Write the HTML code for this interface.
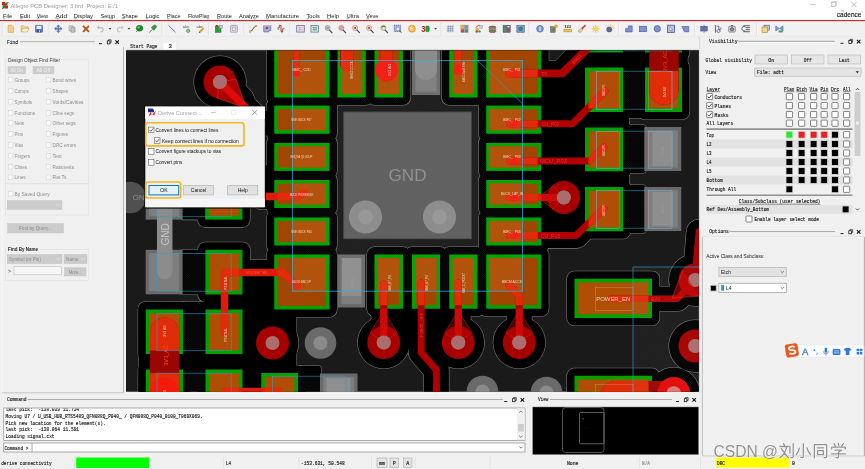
<!DOCTYPE html>
<html><head><meta charset="utf-8"><title>Allegro PCB Designer</title>
<style>
html,body{margin:0;padding:0;background:#f0f0f0;overflow:hidden;}
body{width:865px;height:469px;font-family:"Liberation Sans",sans-serif;}
svg{display:block;}
#wrap{width:865px;height:469px;overflow:hidden;filter:blur(0.35px);}
text{white-space:pre;}
</style></head><body><div id="wrap">
<svg width="865" height="469" viewBox="0 0 865 469">
<rect x="0.00" y="0.00" width="865.00" height="469.00" fill="#f0f0f0" />
<rect x="0.00" y="0.00" width="865.00" height="20.00" fill="#ffffff" />
<g><rect x="2" y="2" width="3" height="3" fill="#d81e1e"/><rect x="5" y="2.5" width="2.5" height="3" fill="#2e9e2e"/><rect x="2.5" y="5" width="2.5" height="3.5" fill="#2e9e2e"/><rect x="5" y="5.5" width="3" height="3" fill="#d81e1e"/><path d="M2 9 L8.5 2" stroke="#b01010" stroke-width="0.8"/></g>
<text x="10.50" y="7.60" font-family='"Liberation Sans", sans-serif' font-size="6.2" fill="#9a9a9a" textLength="107.50" lengthAdjust="spacingAndGlyphs" >Allegro PCB Designer: 3.brd  Project: E:/1</text>
<line x1="810.50" y1="4.60" x2="815.50" y2="4.60" stroke="#9a9a9a" stroke-width="0.6" />
<rect x="831.20" y="2.40" width="4.40" height="4.00" fill="none" stroke="#a8a8a8" stroke-width="0.6" />
<path d="M832.2 2.4 V1.5 H836.6 V5.5 H835.6" fill="none" stroke="#a8a8a8" stroke-width="0.5"/>
<path d="M851.6 2.2 L856.4 7 M856.4 2.2 L851.6 7" stroke="#8a8a8a" stroke-width="0.6"/>
<text x="836.80" y="16.60" font-family='"Liberation Sans", sans-serif' font-size="6.4" fill="#111" textLength="24.60" lengthAdjust="spacingAndGlyphs" stroke="#111" stroke-width="0.12">cadence</text>
<rect x="841.60" y="10.60" width="2.00" height="0.70" fill="#e0202a" />
<text x="861.50" y="12.50" font-family='"Liberation Sans", sans-serif' font-size="2.5" fill="#333" >®</text>
<text x="3.00" y="17.70" font-family='"Liberation Sans", sans-serif' font-size="6.2" fill="#1a1a1a" textLength="9.00" lengthAdjust="spacingAndGlyphs" >File</text>
<line x1="3.00" y1="18.80" x2="5.25" y2="18.80" stroke="#333" stroke-width="0.45" />
<text x="20.00" y="17.70" font-family='"Liberation Sans", sans-serif' font-size="6.2" fill="#1a1a1a" textLength="10.00" lengthAdjust="spacingAndGlyphs" >Edit</text>
<line x1="20.00" y1="18.80" x2="22.50" y2="18.80" stroke="#333" stroke-width="0.45" />
<text x="36.75" y="17.70" font-family='"Liberation Sans", sans-serif' font-size="6.2" fill="#1a1a1a" textLength="11.25" lengthAdjust="spacingAndGlyphs" >View</text>
<line x1="36.75" y1="18.80" x2="39.56" y2="18.80" stroke="#333" stroke-width="0.45" />
<text x="55.50" y="17.70" font-family='"Liberation Sans", sans-serif' font-size="6.2" fill="#1a1a1a" textLength="11.50" lengthAdjust="spacingAndGlyphs" >Add</text>
<line x1="55.50" y1="18.80" x2="59.33" y2="18.80" stroke="#333" stroke-width="0.45" />
<text x="73.75" y="17.70" font-family='"Liberation Sans", sans-serif' font-size="6.2" fill="#1a1a1a" textLength="19.25" lengthAdjust="spacingAndGlyphs" >Display</text>
<line x1="73.75" y1="18.80" x2="76.50" y2="18.80" stroke="#333" stroke-width="0.45" />
<text x="100.50" y="17.70" font-family='"Liberation Sans", sans-serif' font-size="6.2" fill="#1a1a1a" textLength="14.50" lengthAdjust="spacingAndGlyphs" >Setup</text>
<line x1="109.20" y1="18.80" x2="112.10" y2="18.80" stroke="#333" stroke-width="0.45" />
<text x="121.75" y="17.70" font-family='"Liberation Sans", sans-serif' font-size="6.2" fill="#1a1a1a" textLength="16.25" lengthAdjust="spacingAndGlyphs" >Shape</text>
<line x1="121.75" y1="18.80" x2="125.00" y2="18.80" stroke="#333" stroke-width="0.45" />
<text x="145.75" y="17.70" font-family='"Liberation Sans", sans-serif' font-size="6.2" fill="#1a1a1a" textLength="13.75" lengthAdjust="spacingAndGlyphs" >Logic</text>
<line x1="145.75" y1="18.80" x2="148.50" y2="18.80" stroke="#333" stroke-width="0.45" />
<text x="167.00" y="17.70" font-family='"Liberation Sans", sans-serif' font-size="6.2" fill="#1a1a1a" textLength="13.50" lengthAdjust="spacingAndGlyphs" >Place</text>
<line x1="167.00" y1="18.80" x2="169.70" y2="18.80" stroke="#333" stroke-width="0.45" />
<text x="188.00" y="17.70" font-family='"Liberation Sans", sans-serif' font-size="6.2" fill="#1a1a1a" textLength="21.50" lengthAdjust="spacingAndGlyphs" >FlowPlan</text>
<line x1="206.81" y1="18.80" x2="209.50" y2="18.80" stroke="#333" stroke-width="0.45" />
<text x="217.00" y="17.70" font-family='"Liberation Sans", sans-serif' font-size="6.2" fill="#1a1a1a" textLength="15.00" lengthAdjust="spacingAndGlyphs" >Route</text>
<line x1="217.00" y1="18.80" x2="220.00" y2="18.80" stroke="#333" stroke-width="0.45" />
<text x="239.00" y="17.70" font-family='"Liberation Sans", sans-serif' font-size="6.2" fill="#1a1a1a" textLength="20.00" lengthAdjust="spacingAndGlyphs" >Analyze</text>
<line x1="253.29" y1="18.80" x2="256.14" y2="18.80" stroke="#333" stroke-width="0.45" />
<text x="266.00" y="17.70" font-family='"Liberation Sans", sans-serif' font-size="6.2" fill="#1a1a1a" textLength="33.00" lengthAdjust="spacingAndGlyphs" >Manufacture</text>
<line x1="266.00" y1="18.80" x2="269.00" y2="18.80" stroke="#333" stroke-width="0.45" />
<text x="306.50" y="17.70" font-family='"Liberation Sans", sans-serif' font-size="6.2" fill="#1a1a1a" textLength="13.25" lengthAdjust="spacingAndGlyphs" >Tools</text>
<line x1="306.50" y1="18.80" x2="309.15" y2="18.80" stroke="#333" stroke-width="0.45" />
<text x="327.00" y="17.70" font-family='"Liberation Sans", sans-serif' font-size="6.2" fill="#1a1a1a" textLength="12.00" lengthAdjust="spacingAndGlyphs" >Help</text>
<line x1="327.00" y1="18.80" x2="330.00" y2="18.80" stroke="#333" stroke-width="0.45" />
<text x="346.50" y="17.70" font-family='"Liberation Sans", sans-serif' font-size="6.2" fill="#1a1a1a" textLength="12.50" lengthAdjust="spacingAndGlyphs" >Ultra</text>
<line x1="346.50" y1="18.80" x2="349.00" y2="18.80" stroke="#333" stroke-width="0.45" />
<text x="366.00" y="17.70" font-family='"Liberation Sans", sans-serif' font-size="6.2" fill="#1a1a1a" textLength="12.50" lengthAdjust="spacingAndGlyphs" >Veve</text>
<line x1="366.00" y1="18.80" x2="369.12" y2="18.80" stroke="#333" stroke-width="0.45" />
<rect x="0.00" y="20.00" width="865.00" height="1.40" fill="#cc2832" />
<rect x="0.00" y="21.40" width="865.00" height="15.10" fill="#f1f1f1" />
<line x1="0.00" y1="36.30" x2="865.00" y2="36.30" stroke="#e2e2e2" stroke-width="0.6" />
<line x1="2.2" y1="23" x2="2.2" y2="35" stroke="#b8b8b8" stroke-width="0.6" stroke-dasharray="0.8,0.8"/>
<line x1="3.10" y1="23.00" x2="3.10" y2="35.00" stroke="#ffffff" stroke-width="0.5" />
<line x1="49" y1="23" x2="49" y2="35" stroke="#b8b8b8" stroke-width="0.6" stroke-dasharray="0.8,0.8"/>
<line x1="49.90" y1="23.00" x2="49.90" y2="35.00" stroke="#ffffff" stroke-width="0.5" />
<line x1="162" y1="23" x2="162" y2="35" stroke="#b8b8b8" stroke-width="0.6" stroke-dasharray="0.8,0.8"/>
<line x1="162.90" y1="23.00" x2="162.90" y2="35.00" stroke="#ffffff" stroke-width="0.5" />
<line x1="208.7" y1="23" x2="208.7" y2="35" stroke="#b8b8b8" stroke-width="0.6" stroke-dasharray="0.8,0.8"/>
<line x1="209.60" y1="23.00" x2="209.60" y2="35.00" stroke="#ffffff" stroke-width="0.5" />
<line x1="244" y1="23" x2="244" y2="35" stroke="#b8b8b8" stroke-width="0.6" stroke-dasharray="0.8,0.8"/>
<line x1="244.90" y1="23.00" x2="244.90" y2="35.00" stroke="#ffffff" stroke-width="0.5" />
<line x1="289.8" y1="23" x2="289.8" y2="35" stroke="#b8b8b8" stroke-width="0.6" stroke-dasharray="0.8,0.8"/>
<line x1="290.70" y1="23.00" x2="290.70" y2="35.00" stroke="#ffffff" stroke-width="0.5" />
<line x1="441" y1="23" x2="441" y2="35" stroke="#b8b8b8" stroke-width="0.6" stroke-dasharray="0.8,0.8"/>
<line x1="441.90" y1="23.00" x2="441.90" y2="35.00" stroke="#ffffff" stroke-width="0.5" />
<line x1="529" y1="23" x2="529" y2="35" stroke="#b8b8b8" stroke-width="0.6" stroke-dasharray="0.8,0.8"/>
<line x1="529.90" y1="23.00" x2="529.90" y2="35.00" stroke="#ffffff" stroke-width="0.5" />
<line x1="618.8" y1="23" x2="618.8" y2="35" stroke="#b8b8b8" stroke-width="0.6" stroke-dasharray="0.8,0.8"/>
<line x1="619.70" y1="23.00" x2="619.70" y2="35.00" stroke="#ffffff" stroke-width="0.5" />
<line x1="694.8" y1="23" x2="694.8" y2="35" stroke="#b8b8b8" stroke-width="0.6" stroke-dasharray="0.8,0.8"/>
<line x1="695.70" y1="23.00" x2="695.70" y2="35.00" stroke="#ffffff" stroke-width="0.5" />
<line x1="756.5" y1="23" x2="756.5" y2="35" stroke="#b8b8b8" stroke-width="0.6" stroke-dasharray="0.8,0.8"/>
<line x1="757.40" y1="23.00" x2="757.40" y2="35.00" stroke="#ffffff" stroke-width="0.5" />
<g transform="translate(10.9 28.8) scale(0.86) translate(-10.9 -28.8)">
<path d="M7.7 24.6 h4.4 l2 2 v6.4 h-6.4z" fill="#f3cf8c" stroke="#c9963c" stroke-width="0.6"/>
</g>
<g transform="translate(25 28.8) scale(0.86) translate(-25 -28.8)">
<path d="M20.6 32.4 v-7 h3 l1 1.2 h4 v1.4" fill="#f6dfa6" stroke="#c08a2e" stroke-width="0.6"/><path d="M20.6 32.4 l1.6 -4.2 h7.4 l-1.8 4.2z" fill="#fdf3d2" stroke="#c08a2e" stroke-width="0.6"/>
</g>
<g transform="translate(39 28.8) scale(0.86) translate(-39 -28.8)">
<rect x="35.00" y="24.80" width="8.00" height="8.00" fill="#5a78c4" stroke="#3a5296" stroke-width="0.7" rx="0.6" />
<rect x="36.20" y="25.20" width="5.60" height="3.80" fill="#eef2fc" />
<rect x="36.80" y="30.20" width="4.40" height="2.40" fill="#2f4480" />
<rect x="38.80" y="30.60" width="1.60" height="1.80" fill="#d8e0f4" />
</g>
<g transform="translate(58.3 28.8) scale(0.86) translate(-58.3 -28.8)">
<path d="M58.3 24.200000000000003 l1.8 2 h-1.2 v2 h2 v-1.2 l2 1.8 l-2 1.8 v-1.2 h-2 v2 h1.2 l-1.8 2 l-1.8 -2 h1.2 v-2 h-2 v1.2 l-2 -1.8 l2 -1.8 v1.2 h2 v-2 h-1.2z" fill="#5e86b8" stroke="#2f5486" stroke-width="0.4"/>
</g>
<g transform="translate(72 28.8) scale(0.86) translate(-72 -28.8)">
<rect x="68.60" y="25.20" width="4.80" height="6.20" fill="#d8d8d8" stroke="#8a8a8a" stroke-width="0.6" rx="1" />
<rect x="70.80" y="26.80" width="4.80" height="6.00" fill="#c2c2c2" stroke="#777" stroke-width="0.6" rx="1" />
</g>
<g transform="translate(86 28.8) scale(0.86) translate(-86 -28.8)">
<path d="M83.1 25.900000000000002 L88.9 31.7 M88.9 25.900000000000002 L83.1 31.7" stroke="#b4501a" stroke-width="2.1" stroke-linecap="round"/>
</g>
<g transform="translate(100.5 28.8) scale(0.86) translate(-100.5 -28.8)">
<path d="M97.7 27.400000000000002 h3.4 a2.4 2.4 0 0 1 0 4.8 h-1" fill="none" stroke="#bdbdbd" stroke-width="1.3"/><path d="M96.1 27.400000000000002 l2.8 -2.4 v4.8z" fill="#bdbdbd"/>
</g>
<g transform="translate(110 28.8) scale(1.0) translate(-110 -28.8)">
<path d="M108.6 28.0 h2.8 l-1.4 1.8z" fill="#444"/>
</g>
<g transform="translate(120 28.8) scale(0.86) translate(-120 -28.8)">
<path d="M122.8 27.400000000000002 h-3.4 a2.4 2.4 0 0 0 0 4.8 h1" fill="none" stroke="#c8c8c8" stroke-width="1.3"/><path d="M124.4 27.400000000000002 l-2.8 -2.4 v4.8z" fill="#c8c8c8"/>
</g>
<g transform="translate(129 28.8) scale(1.0) translate(-129 -28.8)">
<path d="M127.6 28.0 h2.8 l-1.4 1.8z" fill="#444"/>
</g>
<g transform="translate(139.2 28.8) scale(0.86) translate(-139.2 -28.8)">
<ellipse cx="139.6" cy="28.2" rx="3.8" ry="3.4" fill="#1f8a2a" stroke="#0d5c16" stroke-width="0.5"/><ellipse cx="138.6" cy="27.2" rx="1.4" ry="1" fill="#7fd487"/><path d="M135.6 32.6 l2 -2" stroke="#555" stroke-width="0.9"/>
</g>
<g transform="translate(153 28.8) scale(0.86) translate(-153 -28.8)">
<path d="M148.8 33.2 L152.4 29.2" stroke="#444" stroke-width="0.8"/><path d="M151 27.400000000000002 l3.2 3.2 l3.2 -4.4 l-2.2 -2.2z" fill="#2c9a3a" stroke="#14621e" stroke-width="0.5"/>
</g>
<g transform="translate(172 28.8) scale(0.86) translate(-172 -28.8)">
<path d="M168 24.8 L176 32.8" stroke="#4a6a9a" stroke-width="1"/>
</g>
<g transform="translate(186.6 28.8) scale(0.86) translate(-186.6 -28.8)">
<text x="182.20" y="28.40" font-family='"Liberation Sans", sans-serif' font-size="4.6" fill="#555" textLength="8.00" lengthAdjust="spacingAndGlyphs" >abc</text>
<circle cx="188.40" cy="31.20" r="2.00" fill="#2ca63a" stroke="#0e6b1a" stroke-width="0.4" />
<path d="M187.2 31.2 h2.4 M188.4 30.0 v2.4" stroke="#fff" stroke-width="0.6"/>
</g>
<g transform="translate(200.4 28.8) scale(0.86) translate(-200.4 -28.8)">
<text x="196.00" y="28.40" font-family='"Liberation Sans", sans-serif' font-size="4.6" fill="#555" textLength="8.00" lengthAdjust="spacingAndGlyphs" >abc</text>
<path d="M199.20000000000002 33.0 L204.20000000000002 28.0" stroke="#e09a20" stroke-width="2"/><path d="M198.6 33.6 l0.4 -1.6 l1.2 1.2z" fill="#444"/>
</g>
<g transform="translate(218.8 28.8) scale(0.86) translate(-218.8 -28.8)">
<rect x="214.80" y="26.20" width="6.60" height="6.80" fill="#2c9a3a" stroke="#14621e" stroke-width="0.5" />
<rect x="215.20" y="24.40" width="3.00" height="2.00" fill="#c8202a" />
<rect x="219.40" y="24.60" width="3.80" height="3.60" fill="#c4cad8" stroke="#7f879a" stroke-width="0.5" />
</g>
<g transform="translate(233.9 28.8) scale(0.86) translate(-233.9 -28.8)">
<rect x="229.90" y="24.80" width="8.00" height="8.00" fill="#d9dcec" stroke="#8e96bc" stroke-width="0.8" rx="1" />
<rect x="231.90" y="26.80" width="4.00" height="4.00" fill="#f4e6e6" stroke="#c86a6a" stroke-width="0.5" />
</g>
<g transform="translate(253 28.8) scale(0.86) translate(-253 -28.8)">
<path d="M249.4 32.2 C252.6 32.2 253.4 25.8 256.6 25.8" fill="none" stroke="#333" stroke-width="1"/>
<rect x="248.60" y="31.20" width="2.00" height="2.00" fill="#e8d020" stroke="#a08a10" stroke-width="0.3" />
<rect x="255.60" y="24.60" width="2.00" height="2.00" fill="#e8d020" stroke="#a08a10" stroke-width="0.3" />
</g>
<g transform="translate(267.2 28.8) scale(0.86) translate(-267.2 -28.8)">
<path d="M263.2 24.8 v7.6 h6 v-1.6 h2.2 v-6" fill="#a8b8dc" stroke="#4a66aa" stroke-width="0.8"/>
<rect x="265.60" y="26.40" width="2.80" height="2.80" fill="#c8303a" />
</g>
<g transform="translate(281 28.8) scale(0.86) translate(-281 -28.8)">
<path d="M277 27.8 h2 v-3 h2 v7 h2 v-3 h2" fill="none" stroke="#a83232" stroke-width="1.1"/><path d="M277 29.2 h2 M281 32.6 h2" stroke="#555" stroke-width="0.8"/>
</g>
<g transform="translate(300.5 28.8) scale(0.86) translate(-300.5 -28.8)">
<rect x="296.10" y="25.00" width="8.80" height="7.60" fill="#e9e3ea" stroke="#5f6ea6" stroke-width="0.9" />
<path d="M297.5 27.400000000000002 h6 M297.5 29.8 h6 M299.5 26.2 v5" stroke="#d08a8a" stroke-width="0.6"/>
</g>
<g transform="translate(314.8 28.8) scale(0.86) translate(-314.8 -28.8)">
<rect x="310.40" y="25.00" width="8.80" height="7.60" fill="#e3efe3" stroke="#5f6ea6" stroke-width="0.9" />
<path d="M311.8 27.400000000000002 h6 M311.8 29.8 h6 M313.8 26.2 v5 M316.2 26.2 v5" stroke="#3c9a44" stroke-width="0.7"/>
</g>
<g transform="translate(328.3 28.8) scale(0.86) translate(-328.3 -28.8)">
<path d="M329.1 29.8 L332.5 33.2" stroke="#3a4a7a" stroke-width="1.5" stroke-linecap="round"/>
<circle cx="327.50" cy="27.80" r="2.90" fill="#b9c7e6" stroke="#b88a4a" stroke-width="0.8" />
<rect x="326.10" y="27.00" width="2.80" height="2.00" fill="#7f97c8" />
</g>
<g transform="translate(342 28.8) scale(0.86) translate(-342 -28.8)">
<path d="M342.8 29.8 L346.2 33.2" stroke="#3a4a7a" stroke-width="1.5" stroke-linecap="round"/>
<circle cx="341.20" cy="27.80" r="2.90" fill="#d4a6b4" stroke="#b88a4a" stroke-width="0.8" />
</g>
<g transform="translate(355.8 28.8) scale(0.86) translate(-355.8 -28.8)">
<path d="M356.6 29.8 L360.0 33.2" stroke="#3a4a7a" stroke-width="1.5" stroke-linecap="round"/>
<circle cx="355.00" cy="27.80" r="2.90" fill="#f0d8dc" stroke="#b88a4a" stroke-width="0.8" />
<rect x="354.00" y="26.80" width="2.00" height="2.00" fill="#c8202a" />
</g>
<g transform="translate(369.7 28.8) scale(0.86) translate(-369.7 -28.8)">
<path d="M370.5 29.8 L373.9 33.2" stroke="#3a4a7a" stroke-width="1.5" stroke-linecap="round"/>
<circle cx="368.90" cy="27.80" r="2.90" fill="#f0d8dc" stroke="#b88a4a" stroke-width="0.8" />
<rect x="367.90" y="26.80" width="2.00" height="2.00" fill="#c8202a" />
</g>
<g transform="translate(384 28.8) scale(0.86) translate(-384 -28.8)">
<path d="M384.8 29.8 L388.2 33.2" stroke="#3a4a7a" stroke-width="1.5" stroke-linecap="round"/>
<circle cx="383.20" cy="27.80" r="2.90" fill="#e8e0d0" stroke="#b88a4a" stroke-width="0.8" />
<path d="M381.4 27.400000000000002 a2.2 2.2 0 0 1 4 -0.6" fill="none" stroke="#1f8a2a" stroke-width="1.2"/>
</g>
<g transform="translate(397.8 28.8) scale(0.86) translate(-397.8 -28.8)">
<rect x="393.6" y="24.6" width="7.4" height="7.4" fill="#a9bad9" stroke="#3f558c" stroke-width="0.8" stroke-dasharray="1.4,0.8"/>
<circle cx="398.00" cy="29.00" r="2.20" fill="#eef3fb" stroke="#6a86c0" stroke-width="0.7" />
<path d="M399.6 30.6 L402.2 33.4" stroke="#8a6a3a" stroke-width="1.2"/>
</g>
<g transform="translate(412 28.8) scale(0.86) translate(-412 -28.8)">
<circle cx="412.00" cy="28.80" r="3.60" fill="#fde3b4" stroke="#f09a20" stroke-width="1.4" />
<path d="M410.6 29.2 a1.6 1.6 0 1 0 1.4 -2" fill="none" stroke="#f09a20" stroke-width="0.8"/>
</g>
<g transform="translate(425.5 28.8) scale(0.86) translate(-425.5 -28.8)">
<text x="420.50" y="32.20" font-family='"Liberation Sans", sans-serif' font-size="9.5" fill="#c4141e" textLength="4.80" lengthAdjust="spacingAndGlyphs" font-weight="bold" >3</text>
<rect x="425.70" y="25.60" width="4.20" height="6.60" fill="#22a03a" stroke="#0e6b1a" stroke-width="0.4" rx="1.2" />
</g>
<g transform="translate(435.6 28.8) scale(1.0) translate(-435.6 -28.8)">
<path d="M434.20000000000005 28.0 h2.8 l-1.4 1.8z" fill="#444"/>
</g>
<g transform="translate(450.3 28.8) scale(0.86) translate(-450.3 -28.8)">
<path d="M446.3 26.400000000000002 h8 M446.3 28.8 h8 M446.3 31.2 h8 M447.90000000000003 24.8 v8 M450.3 24.8 v8 M452.7 24.8 v8" stroke="#6a80b8" stroke-width="0.7"/>
<circle cx="453.70" cy="25.20" r="1.00" fill="#f6c67a" />
</g>
<g transform="translate(464.5 28.8) scale(0.86) translate(-464.5 -28.8)">
<rect x="459.90" y="24.20" width="9.20" height="9.20" fill="#a4a4a8" />
<rect x="460.50" y="24.80" width="3.40" height="3.40" fill="#e8b820" />
<rect x="465.10" y="24.80" width="3.40" height="3.40" fill="#7a8ec8" />
<rect x="460.50" y="29.40" width="3.40" height="3.40" fill="#c84a3a" />
<rect x="465.10" y="29.40" width="3.40" height="3.40" fill="#4a9a5a" />
</g>
<g transform="translate(478.8 28.8) scale(0.86) translate(-478.8 -28.8)">
<circle cx="476.80" cy="29.40" r="1.60" fill="#e8c020" stroke="#8a7a10" stroke-width="0.3" />
<circle cx="476.40" cy="32.00" r="1.40" fill="#c83a3a" />
<circle cx="479.60" cy="31.80" r="1.40" fill="#3a9a4a" />
<path d="M475.8 27.400000000000002 a4 4 0 0 1 4 -2.6" fill="none" stroke="#c8303a" stroke-width="1"/>
<rect x="479.80" y="24.80" width="3.40" height="3.60" fill="#c8ccd4" stroke="#8a8e9a" stroke-width="0.4" />
</g>
<g transform="translate(492.5 28.8) scale(0.86) translate(-492.5 -28.8)">
<ellipse cx="492.5" cy="27.2" rx="4" ry="1.6" fill="#4a9a5a" stroke="#a83232" stroke-width="0.7"/><ellipse cx="492.5" cy="29.400000000000002" rx="4" ry="1.6" fill="#c8a0a0" stroke="#a83232" stroke-width="0.7"/><ellipse cx="492.5" cy="31.6" rx="4" ry="1.6" fill="#4a9a5a" stroke="#a83232" stroke-width="0.7"/>
</g>
<g transform="translate(506.7 28.8) scale(0.86) translate(-506.7 -28.8)">
<rect x="502.50" y="24.60" width="8.40" height="8.40" fill="#5f6e96" stroke="#3a466a" stroke-width="0.5" />
<rect x="503.70" y="25.80" width="2.40" height="6.40" fill="#3aa04a" />
<rect x="507.50" y="28.20" width="2.40" height="4.00" fill="#c83a3a" />
<rect x="507.50" y="25.60" width="2.40" height="1.60" fill="#d8e0f0" />
</g>
<g transform="translate(520.6 28.8) scale(0.86) translate(-520.6 -28.8)">
<rect x="516.20" y="24.60" width="8.80" height="8.40" fill="#7f8aa6" stroke="#4a5472" stroke-width="0.5" />
<circle cx="520.60" cy="28.80" r="3.30" fill="#2f6ac0" stroke="#e8eef8" stroke-width="0.5" />
<path d="M519.0 26.8 l2 0.6 l-0.6 2.4 l-1.8 0.2z M521.4 29.2 l1.6 0 l-0.6 2z" fill="#3aa04a"/>
</g>
<g transform="translate(540 28.8) scale(0.86) translate(-540 -28.8)">
<circle cx="540.00" cy="28.80" r="3.90" fill="#7f9ad8" stroke="#3a5ab0" stroke-width="0.7" />
<rect x="539.30" y="26.20" width="1.40" height="5.20" fill="#f8e8a0" />
</g>
<g transform="translate(553.5 28.8) scale(0.86) translate(-553.5 -28.8)">
<rect x="549.90" y="26.20" width="5.60" height="6.80" fill="#8a8e96" stroke="#555" stroke-width="0.5" />
<rect x="550.90" y="27.40" width="1.80" height="4.80" fill="#3aa04a" />
<rect x="553.30" y="27.40" width="1.40" height="4.80" fill="#c83a3a" />
<circle cx="556.50" cy="25.80" r="1.70" fill="#f2b620" stroke="#b8860a" stroke-width="0.4" />
</g>
<g transform="translate(567.7 28.8) scale(0.86) translate(-567.7 -28.8)">
<text x="563.70" y="28.00" font-family='"Liberation Sans", sans-serif' font-size="4.4" fill="#333" textLength="8.00" lengthAdjust="spacingAndGlyphs" font-weight="bold" >123</text>
<rect x="563.30" y="29.20" width="8.80" height="3.20" fill="#eec060" stroke="#a87a1a" stroke-width="0.5" />
</g>
<g transform="translate(582 28.8) scale(0.86) translate(-582 -28.8)">
<path d="M586 24.6 L581.6 29.0" stroke="#c8283a" stroke-width="1.8"/><path d="M581.2 27.8 l2 2 l-3.4 3.4 l-2.4 -1.6z" fill="#e8d28a" stroke="#6a5a2a" stroke-width="0.4"/>
</g>
<g transform="translate(595.7 28.8) scale(0.86) translate(-595.7 -28.8)">
<g stroke="#f0a820" stroke-width="0.9"><line x1="598.30" y1="28.80" x2="600.30" y2="28.80"/><line x1="597.54" y1="30.64" x2="598.95" y2="32.05"/><line x1="595.70" y1="31.40" x2="595.70" y2="33.40"/><line x1="593.86" y1="30.64" x2="592.45" y2="32.05"/><line x1="593.10" y1="28.80" x2="591.10" y2="28.80"/><line x1="593.86" y1="26.96" x2="592.45" y2="25.55"/><line x1="595.70" y1="26.20" x2="595.70" y2="24.20"/><line x1="597.54" y1="26.96" x2="598.95" y2="25.55"/></g>
<circle cx="595.70" cy="28.80" r="2.30" fill="#fde040" stroke="#f0a820" stroke-width="0.5" />
</g>
<g transform="translate(609.6 28.8) scale(0.86) translate(-609.6 -28.8)">
<g stroke="#f0a820" stroke-width="0.9"><line x1="612.80" y1="27.80" x2="614.80" y2="27.80"/><line x1="612.16" y1="29.36" x2="613.57" y2="30.77"/><line x1="610.60" y1="30.00" x2="610.60" y2="32.00"/><line x1="609.04" y1="29.36" x2="607.63" y2="30.77"/><line x1="608.40" y1="27.80" x2="606.40" y2="27.80"/><line x1="609.04" y1="26.24" x2="607.63" y2="24.83"/><line x1="610.60" y1="25.60" x2="610.60" y2="23.60"/><line x1="612.16" y1="26.24" x2="613.57" y2="24.83"/></g>
<circle cx="609.20" cy="29.60" r="3.00" fill="#5a6e9a" stroke="#2f3f66" stroke-width="0.5" />
</g>
<g transform="translate(628.9 28.8) scale(0.86) translate(-628.9 -28.8)">
<path d="M625.1 32.4 v-4 h3.2 v-3 h4.4 v7z" fill="#7f94cc" stroke="#3a54a0" stroke-width="0.7"/>
</g>
<g transform="translate(643 28.8) scale(0.86) translate(-643 -28.8)">
<rect x="639.00" y="25.80" width="8.00" height="6.40" fill="#7f94cc" stroke="#3a54a0" stroke-width="0.7" />
</g>
<g transform="translate(657.3 28.8) scale(0.86) translate(-657.3 -28.8)">
<circle cx="657.30" cy="28.80" r="3.70" fill="#7f94cc" stroke="#3a54a0" stroke-width="0.7" />
</g>
<g transform="translate(671 28.8) scale(0.86) translate(-671 -28.8)">
<rect x="666.80" y="24.60" width="8.40" height="8.40" fill="#b8c8ec" stroke="#3a54a0" stroke-width="0.9" />
<path d="M669.4 26.2 v5 l1.2 -1 l1 2 l0.8 -0.4 l-1 -2 h1.6z" fill="#fff" stroke="#333" stroke-width="0.4"/>
</g>
<g transform="translate(685.3 28.8) scale(0.86) translate(-685.3 -28.8)">
<path d="M681.3 26.2 h8 v6 h-5z" fill="#7f94cc" stroke="#3a54a0" stroke-width="0.7"/>
</g>
<g transform="translate(704.2 28.8) scale(0.86) translate(-704.2 -28.8)">
<rect x="700.20" y="25.80" width="3.00" height="5.60" fill="#5a74b8" stroke="#2f4686" stroke-width="0.5" />
<rect x="704.80" y="25.80" width="3.00" height="5.60" fill="#5a74b8" stroke="#2f4686" stroke-width="0.5" />
<line x1="704.00" y1="24.20" x2="704.00" y2="33.40" stroke="#333" stroke-width="0.7" />
</g>
<g transform="translate(717.7 28.8) scale(0.86) translate(-717.7 -28.8)">
<line x1="715.10" y1="24.40" x2="715.10" y2="33.20" stroke="#333" stroke-width="0.9" />
<path d="M716.7 25.8 h2.4 v4 a1.8 1.8 0 0 0 2.2 -2.6" fill="none" stroke="#4a5a8a" stroke-width="1"/><ellipse cx="718.7" cy="31.400000000000002" rx="2" ry="1.6" fill="none" stroke="#4a5a8a" stroke-width="0.9"/>
</g>
<g transform="translate(732 28.8) scale(0.86) translate(-732 -28.8)">
<rect x="728.20" y="25.80" width="7.60" height="6.80" fill="#dcdcdc" stroke="#555" stroke-width="0.7" rx="1" />
<circle cx="732.00" cy="29.40" r="2.00" fill="#8a8a8a" stroke="#333" stroke-width="0.6" />
<rect x="730.80" y="24.60" width="2.40" height="1.20" fill="#555" />
</g>
<g transform="translate(746.5 28.8) scale(0.86) translate(-746.5 -28.8)">
<path d="M742.9 25.2 h7.6 M745.5 27.400000000000002 h5 M745.5 29.8 h5 M742.9 32.2 h7.6" stroke="#333" stroke-width="0.9"/><path d="M744.9 26.400000000000002 a2.6 2.6 0 1 0 0 4.6" fill="none" stroke="#4a5a8a" stroke-width="1.1"/>
</g>
<g transform="translate(765.7 28.8) scale(0.86) translate(-765.7 -28.8)">
<rect x="763.70" y="24.60" width="6.40" height="5.80" fill="#b8c8ec" stroke="#3a54a0" stroke-width="0.7" />
<rect x="761.50" y="26.80" width="6.20" height="6.20" fill="#f2d88a" stroke="#a8861a" stroke-width="0.7" />
</g>
<g transform="translate(779.4 28.8) scale(0.86) translate(-779.4 -28.8)">
<path d="M775.1999999999999 25.400000000000002 l4 3 l-4 3z M783.6 25.400000000000002 l-4 3 l4 3z" fill="#7fa0dc" stroke="#3a54a0" stroke-width="0.6"/>
<rect x="778.40" y="30.80" width="5.00" height="2.20" fill="#3aa04a" />
</g>
<text x="7.00" y="43.50" font-family='"Liberation Mono", monospace' font-size="5.6" fill="#222" textLength="11.00" lengthAdjust="spacingAndGlyphs" stroke="#222" stroke-width="0.16" >Find</text>
<line x1="20.00" y1="41.80" x2="95.00" y2="41.80" stroke="#adadad" stroke-width="1.2" />
<line x1="20.00" y1="42.70" x2="95.00" y2="42.70" stroke="#ffffff" stroke-width="0.5" />
<line x1="99.00" y1="43.70" x2="102.00" y2="43.70" stroke="#222" stroke-width="1" />
<rect x="107.30" y="40.90" width="2.60" height="3.00" fill="#f0f0f0" stroke="#222" stroke-width="0.8" />
<path d="M108.4 40.9 v-1.1 h2.7 v2.9 h-1.1" fill="none" stroke="#222" stroke-width="0.75"/>
<path d="M115.4 40.300000000000004 l3.5 3.5 M118.9 40.300000000000004 l-3.5 3.5" stroke="#111" stroke-width="1.05"/>
<rect x="2.00" y="47.00" width="121.40" height="345.60" fill="#f0f0f0" stroke="#fbfbfb" stroke-width="0.8" />
<line x1="123.60" y1="47.00" x2="123.60" y2="392.60" stroke="#9a9a9a" stroke-width="0.8" />
<line x1="2.00" y1="392.80" x2="124.00" y2="392.80" stroke="#b4b4b4" stroke-width="0.8" />
<rect x="124.00" y="37.00" width="2.00" height="356.00" fill="#f0f0f0" />
<rect x="5.50" y="59.60" width="83.00" height="124.20" fill="none" stroke="#dfdfdf" stroke-width="0.6" />
<rect x="7.20" y="57.00" width="53.80" height="5.50" fill="#f0f0f0" />
<text x="8.00" y="61.60" font-family='"Liberation Sans", sans-serif' font-size="5.6" fill="#3a3a3a" textLength="52.00" lengthAdjust="spacingAndGlyphs" >Design Object Find Filter</text>
<rect x="8.00" y="66.50" width="17.60" height="7.30" fill="#cccccc" stroke="#c0c0c0" stroke-width="0.4" />
<text x="10.40" y="72.20" font-family='"Liberation Sans", sans-serif' font-size="5.3" fill="#f4f4f4" textLength="12.60" lengthAdjust="spacingAndGlyphs" >All On</text>
<rect x="33.00" y="66.50" width="21.00" height="7.30" fill="#cccccc" stroke="#c0c0c0" stroke-width="0.4" />
<text x="36.60" y="72.20" font-family='"Liberation Sans", sans-serif' font-size="5.3" fill="#f4f4f4" textLength="13.60" lengthAdjust="spacingAndGlyphs" >All Off</text>
<rect x="8.20" y="77.20" width="4.70" height="4.80" fill="#fbfbfb" stroke="#cfcfcf" stroke-width="0.5" />
<text x="14.60" y="81.50" font-family='"Liberation Sans", sans-serif' font-size="5.5" fill="#8d8d8d" textLength="15.00" lengthAdjust="spacingAndGlyphs" >Groups</text>
<rect x="46.20" y="77.20" width="4.70" height="4.80" fill="#fbfbfb" stroke="#cfcfcf" stroke-width="0.5" />
<text x="52.60" y="81.50" font-family='"Liberation Sans", sans-serif' font-size="5.5" fill="#8d8d8d" textLength="23.50" lengthAdjust="spacingAndGlyphs" >Bond wires</text>
<rect x="8.20" y="88.30" width="4.70" height="4.80" fill="#fbfbfb" stroke="#cfcfcf" stroke-width="0.5" />
<text x="14.60" y="92.60" font-family='"Liberation Sans", sans-serif' font-size="5.5" fill="#8d8d8d" textLength="14.00" lengthAdjust="spacingAndGlyphs" >Comps</text>
<rect x="46.20" y="88.30" width="4.70" height="4.80" fill="#fbfbfb" stroke="#cfcfcf" stroke-width="0.5" />
<text x="52.60" y="92.60" font-family='"Liberation Sans", sans-serif' font-size="5.5" fill="#8d8d8d" textLength="15.50" lengthAdjust="spacingAndGlyphs" >Shapes</text>
<rect x="8.20" y="99.20" width="4.70" height="4.80" fill="#fbfbfb" stroke="#cfcfcf" stroke-width="0.5" />
<text x="14.60" y="103.50" font-family='"Liberation Sans", sans-serif' font-size="5.5" fill="#8d8d8d" textLength="17.50" lengthAdjust="spacingAndGlyphs" >Symbols</text>
<rect x="46.20" y="99.20" width="4.70" height="4.80" fill="#fbfbfb" stroke="#cfcfcf" stroke-width="0.5" />
<text x="52.60" y="103.50" font-family='"Liberation Sans", sans-serif' font-size="5.5" fill="#8d8d8d" textLength="31.00" lengthAdjust="spacingAndGlyphs" >Voids/Cavities</text>
<rect x="8.20" y="110.70" width="4.70" height="4.80" fill="#fbfbfb" stroke="#cfcfcf" stroke-width="0.5" />
<text x="14.60" y="115.00" font-family='"Liberation Sans", sans-serif' font-size="5.5" fill="#8d8d8d" textLength="20.50" lengthAdjust="spacingAndGlyphs" >Functions</text>
<rect x="46.20" y="110.70" width="4.70" height="4.80" fill="#fbfbfb" stroke="#cfcfcf" stroke-width="0.5" />
<text x="52.60" y="115.00" font-family='"Liberation Sans", sans-serif' font-size="5.5" fill="#8d8d8d" textLength="21.50" lengthAdjust="spacingAndGlyphs" >Cline segs</text>
<rect x="8.20" y="120.80" width="4.70" height="4.80" fill="#fbfbfb" stroke="#cfcfcf" stroke-width="0.5" />
<text x="14.60" y="125.10" font-family='"Liberation Sans", sans-serif' font-size="5.5" fill="#8d8d8d" textLength="9.50" lengthAdjust="spacingAndGlyphs" >Nets</text>
<rect x="46.20" y="120.80" width="4.70" height="4.80" fill="#fbfbfb" stroke="#cfcfcf" stroke-width="0.5" />
<text x="52.60" y="125.10" font-family='"Liberation Sans", sans-serif' font-size="5.5" fill="#8d8d8d" textLength="23.00" lengthAdjust="spacingAndGlyphs" >Other segs</text>
<rect x="8.20" y="131.70" width="4.70" height="4.80" fill="#fbfbfb" stroke="#cfcfcf" stroke-width="0.5" />
<text x="14.60" y="136.00" font-family='"Liberation Sans", sans-serif' font-size="5.5" fill="#8d8d8d" textLength="8.50" lengthAdjust="spacingAndGlyphs" >Pins</text>
<rect x="46.20" y="131.70" width="4.70" height="4.80" fill="#fbfbfb" stroke="#cfcfcf" stroke-width="0.5" />
<text x="52.60" y="136.00" font-family='"Liberation Sans", sans-serif' font-size="5.5" fill="#8d8d8d" textLength="15.50" lengthAdjust="spacingAndGlyphs" >Figures</text>
<rect x="8.20" y="142.50" width="4.70" height="4.80" fill="#fbfbfb" stroke="#cfcfcf" stroke-width="0.5" />
<text x="14.60" y="146.80" font-family='"Liberation Sans", sans-serif' font-size="5.5" fill="#8d8d8d" textLength="8.50" lengthAdjust="spacingAndGlyphs" >Vias</text>
<rect x="46.20" y="142.50" width="4.70" height="4.80" fill="#fbfbfb" stroke="#cfcfcf" stroke-width="0.5" />
<text x="52.60" y="146.80" font-family='"Liberation Sans", sans-serif' font-size="5.5" fill="#8d8d8d" textLength="23.50" lengthAdjust="spacingAndGlyphs" >DRC errors</text>
<rect x="8.20" y="153.30" width="4.70" height="4.80" fill="#fbfbfb" stroke="#cfcfcf" stroke-width="0.5" />
<text x="14.60" y="157.60" font-family='"Liberation Sans", sans-serif' font-size="5.5" fill="#8d8d8d" textLength="15.50" lengthAdjust="spacingAndGlyphs" >Fingers</text>
<rect x="46.20" y="153.30" width="4.70" height="4.80" fill="#fbfbfb" stroke="#cfcfcf" stroke-width="0.5" />
<text x="52.60" y="157.60" font-family='"Liberation Sans", sans-serif' font-size="5.5" fill="#8d8d8d" textLength="9.00" lengthAdjust="spacingAndGlyphs" >Text</text>
<rect x="8.20" y="164.20" width="4.70" height="4.80" fill="#fbfbfb" stroke="#cfcfcf" stroke-width="0.5" />
<text x="14.60" y="168.50" font-family='"Liberation Sans", sans-serif' font-size="5.5" fill="#8d8d8d" textLength="12.50" lengthAdjust="spacingAndGlyphs" >Clines</text>
<rect x="46.20" y="164.20" width="4.70" height="4.80" fill="#fbfbfb" stroke="#cfcfcf" stroke-width="0.5" />
<text x="52.60" y="168.50" font-family='"Liberation Sans", sans-serif' font-size="5.5" fill="#8d8d8d" textLength="21.50" lengthAdjust="spacingAndGlyphs" >Ratsnests</text>
<rect x="8.20" y="175.00" width="4.70" height="4.80" fill="#fbfbfb" stroke="#cfcfcf" stroke-width="0.5" />
<text x="14.60" y="179.30" font-family='"Liberation Sans", sans-serif' font-size="5.5" fill="#8d8d8d" textLength="11.00" lengthAdjust="spacingAndGlyphs" >Lines</text>
<rect x="46.20" y="175.00" width="4.70" height="4.80" fill="#fbfbfb" stroke="#cfcfcf" stroke-width="0.5" />
<text x="52.60" y="179.30" font-family='"Liberation Sans", sans-serif' font-size="5.5" fill="#8d8d8d" textLength="14.00" lengthAdjust="spacingAndGlyphs" >Rat Ts</text>
<rect x="5.50" y="183.80" width="83.00" height="31.20" fill="none" stroke="#dfdfdf" stroke-width="0.6" />
<rect x="8.20" y="191.20" width="4.70" height="4.80" fill="#fbfbfb" stroke="#cfcfcf" stroke-width="0.5" />
<text x="14.60" y="195.50" font-family='"Liberation Sans", sans-serif' font-size="5.5" fill="#8d8d8d" textLength="35.00" lengthAdjust="spacingAndGlyphs" >By Saved Query</text>
<rect x="7.20" y="200.50" width="54.80" height="9.00" fill="#cccccc" stroke="#c2c2c2" stroke-width="0.4" />
<path d="M56.6 204.2 l1.6 1.6 l1.6 -1.6" fill="none" stroke="#f0f0f0" stroke-width="0.6"/>
<rect x="7.70" y="223.50" width="55.80" height="9.50" fill="#cccccc" stroke="#c2c2c2" stroke-width="0.4" />
<text x="19.00" y="230.20" font-family='"Liberation Sans", sans-serif' font-size="5.5" fill="#8a8a8a" textLength="33.00" lengthAdjust="spacingAndGlyphs" >Find by Query...</text>
<rect x="5.50" y="249.40" width="83.00" height="31.10" fill="none" stroke="#dfdfdf" stroke-width="0.6" />
<rect x="7.20" y="246.50" width="31.80" height="5.50" fill="#f0f0f0" />
<text x="8.00" y="251.20" font-family='"Liberation Sans", sans-serif' font-size="5.6" fill="#1a1a1a" textLength="30.00" lengthAdjust="spacingAndGlyphs" font-weight="bold" >Find By Name</text>
<rect x="7.20" y="254.40" width="54.80" height="9.30" fill="#cccccc" stroke="#c2c2c2" stroke-width="0.4" />
<text x="9.00" y="261.00" font-family='"Liberation Sans", sans-serif' font-size="5.5" fill="#8a8a8a" textLength="32.00" lengthAdjust="spacingAndGlyphs" >Symbol (or Pin)</text>
<path d="M56.6 258.2 l1.6 1.6 l1.6 -1.6" fill="none" stroke="#f0f0f0" stroke-width="0.6"/>
<rect x="64.00" y="254.40" width="23.00" height="9.30" fill="#cccccc" stroke="#c2c2c2" stroke-width="0.4" />
<text x="66.00" y="261.00" font-family='"Liberation Sans", sans-serif' font-size="5.5" fill="#8a8a8a" textLength="12.50" lengthAdjust="spacingAndGlyphs" >Name</text>
<path d="M81.4 258.2 l1.6 1.6 l1.6 -1.6" fill="none" stroke="#f0f0f0" stroke-width="0.6"/>
<text x="8.00" y="272.80" font-family='"Liberation Sans", sans-serif' font-size="5.5" fill="#333" >&gt;</text>
<rect x="14.00" y="266.40" width="47.50" height="8.40" fill="#f6f6f6" stroke="#bdbdbd" stroke-width="0.6" />
<rect x="64.50" y="267.70" width="21.50" height="8.30" fill="#cccccc" stroke="#c2c2c2" stroke-width="0.4" />
<text x="68.80" y="273.80" font-family='"Liberation Sans", sans-serif' font-size="5.5" fill="#8a8a8a" textLength="13.00" lengthAdjust="spacingAndGlyphs" >More...</text>
<rect x="126.00" y="37.00" width="574.00" height="13.30" fill="#f0f0f0" />
<text x="130.30" y="48.00" font-family='"Liberation Mono", monospace' font-size="5.8" fill="#222" textLength="27.00" lengthAdjust="spacingAndGlyphs" stroke="#222" stroke-width="0.16" >Start Page</text>
<rect x="163.00" y="42.30" width="13.20" height="8.00" fill="#ffffff" stroke="#e4e4e4" stroke-width="0.4" />
<text x="168.40" y="48.00" font-family='"Liberation Mono", monospace' font-size="5.8" fill="#222" stroke="#222" stroke-width="0.16" >3</text>
<text x="7.00" y="401.30" font-family='"Liberation Mono", monospace' font-size="5.6" fill="#222" textLength="19.50" lengthAdjust="spacingAndGlyphs" stroke="#222" stroke-width="0.16" >Command</text>
<line x1="27.50" y1="399.60" x2="503.00" y2="399.60" stroke="#adadad" stroke-width="1.2" />
<line x1="27.50" y1="400.50" x2="503.00" y2="400.50" stroke="#ffffff" stroke-width="0.5" />
<line x1="504.20" y1="401.50" x2="507.20" y2="401.50" stroke="#222" stroke-width="1" />
<rect x="512.50" y="398.70" width="2.60" height="3.00" fill="#f0f0f0" stroke="#222" stroke-width="0.8" />
<path d="M513.6 398.7 v-1.1 h2.7 v2.9 h-1.1" fill="none" stroke="#222" stroke-width="0.75"/>
<path d="M520.6 398.09999999999997 l3.5 3.5 M524.1 398.09999999999997 l-3.5 3.5" stroke="#111" stroke-width="1.05"/>
<rect x="3.75" y="408.00" width="521.25" height="32.50" fill="#ffffff" stroke="#8a8a8a" stroke-width="0.7" />
<clipPath id="cmdclip"><rect x="4.2" y="408.4" width="512" height="31.6"/></clipPath><g clip-path="url(#cmdclip)">
<text x="5.60" y="410.90" font-family='"Liberation Mono", monospace' font-size="5.6" fill="#1a1a1a" textLength="73.50" lengthAdjust="spacingAndGlyphs" stroke="#1a1a1a" stroke-width="0.16" >last pick:  -138.039 11.724</text>
<text x="5.60" y="418.40" font-family='"Liberation Mono", monospace' font-size="5.6" fill="#1a1a1a" textLength="197.00" lengthAdjust="spacingAndGlyphs" stroke="#1a1a1a" stroke-width="0.16" >Moving U7 / U_USB_HUB_RTS5489_QFN088Q_P040_ / QFN088Q_P040_0100_T069X069.</text>
<text x="5.60" y="424.90" font-family='"Liberation Mono", monospace' font-size="5.6" fill="#1a1a1a" textLength="100.00" lengthAdjust="spacingAndGlyphs" stroke="#1a1a1a" stroke-width="0.16" >Pick new location for the element(s).</text>
<text x="5.60" y="431.40" font-family='"Liberation Mono", monospace' font-size="5.6" fill="#1a1a1a" textLength="73.50" lengthAdjust="spacingAndGlyphs" stroke="#1a1a1a" stroke-width="0.16" >last pick:  -138.064 11.591</text>
<text x="5.60" y="437.90" font-family='"Liberation Mono", monospace' font-size="5.6" fill="#1a1a1a" textLength="49.00" lengthAdjust="spacingAndGlyphs" stroke="#1a1a1a" stroke-width="0.16" >Loading signal.cxt</text>
</g>
<rect x="517.00" y="408.40" width="7.60" height="31.70" fill="#f0f0f0" />
<path d="M519.2 412.6 l1.6 -1.6 l1.6 1.6 M519.2 435.8 l1.6 1.6 l1.6 -1.6" fill="none" stroke="#444" stroke-width="0.7"/>
<rect x="518.00" y="424.00" width="5.80" height="7.60" fill="#cdcdcd" />
<rect x="3.75" y="443.00" width="521.25" height="9.00" fill="#ffffff" stroke="#8a8a8a" stroke-width="0.7" />
<line x1="32.00" y1="443.00" x2="32.00" y2="452.00" stroke="#8a8a8a" stroke-width="0.7" />
<text x="4.40" y="449.60" font-family='"Liberation Mono", monospace' font-size="5.6" fill="#1a1a1a" textLength="24.00" lengthAdjust="spacingAndGlyphs" stroke="#1a1a1a" stroke-width="0.16" >Command &gt;</text>
<path d="M519.4 446.6 l1.6 1.6 l1.6 -1.6" fill="none" stroke="#444" stroke-width="0.7"/>
<text x="538.00" y="401.30" font-family='"Liberation Mono", monospace' font-size="5.6" fill="#222" textLength="10.50" lengthAdjust="spacingAndGlyphs" stroke="#222" stroke-width="0.16" >View</text>
<line x1="550.00" y1="399.60" x2="672.00" y2="399.60" stroke="#adadad" stroke-width="1.2" />
<line x1="550.00" y1="400.50" x2="672.00" y2="400.50" stroke="#ffffff" stroke-width="0.5" />
<line x1="676.00" y1="401.50" x2="679.00" y2="401.50" stroke="#222" stroke-width="1" />
<rect x="684.30" y="398.70" width="2.60" height="3.00" fill="#f0f0f0" stroke="#222" stroke-width="0.8" />
<path d="M685.4 398.7 v-1.1 h2.7 v2.9 h-1.1" fill="none" stroke="#222" stroke-width="0.75"/>
<path d="M692.4 398.09999999999997 l3.5 3.5 M695.9 398.09999999999997 l-3.5 3.5" stroke="#111" stroke-width="1.05"/>
<rect x="532.75" y="407.00" width="165.75" height="47.50" fill="#000000" stroke="#7a7a7a" stroke-width="0.5" />
<rect x="562.50" y="407.60" width="41.50" height="44.90" fill="none" stroke="#8a8a8a" stroke-width="0.6" rx="3" />
<rect x="579.50" y="412.50" width="24.50" height="31.25" fill="none" stroke="#9a9a9a" stroke-width="0.6" rx="1" />
<rect x="582.60" y="418.20" width="1.00" height="1.20" fill="#777" />
<rect x="585.60" y="427.60" width="0.60" height="0.60" fill="#555" />
<rect x="0.00" y="455.80" width="865.00" height="13.20" fill="#f0f0f0" />
<text x="1.20" y="465.20" font-family='"Liberation Mono", monospace' font-size="5.6" fill="#1a1a1a" textLength="50.50" lengthAdjust="spacingAndGlyphs" stroke="#1a1a1a" stroke-width="0.16" >derive connectivity</text>
<rect x="76.20" y="457.50" width="73.00" height="10.50" fill="#00ff00" />
<line x1="74.60" y1="457.00" x2="74.60" y2="468.60" stroke="#dcdcdc" stroke-width="0.6" />
<line x1="223.50" y1="457.00" x2="223.50" y2="468.60" stroke="#dcdcdc" stroke-width="0.6" />
<line x1="299.00" y1="457.00" x2="299.00" y2="468.60" stroke="#dcdcdc" stroke-width="0.6" />
<line x1="371.50" y1="457.00" x2="371.50" y2="468.60" stroke="#dcdcdc" stroke-width="0.6" />
<line x1="415.50" y1="457.00" x2="415.50" y2="468.60" stroke="#dcdcdc" stroke-width="0.6" />
<line x1="490.00" y1="457.00" x2="490.00" y2="468.60" stroke="#dcdcdc" stroke-width="0.6" />
<line x1="639.50" y1="457.00" x2="639.50" y2="468.60" stroke="#dcdcdc" stroke-width="0.6" />
<line x1="700.50" y1="457.00" x2="700.50" y2="468.60" stroke="#dcdcdc" stroke-width="0.6" />
<text x="226.00" y="465.20" font-family='"Liberation Mono", monospace' font-size="5.6" fill="#1a1a1a" textLength="5.00" lengthAdjust="spacingAndGlyphs" stroke="#1a1a1a" stroke-width="0.16" >L4</text>
<text x="301.00" y="465.20" font-family='"Liberation Mono", monospace' font-size="5.6" fill="#1a1a1a" textLength="43.70" lengthAdjust="spacingAndGlyphs" stroke="#1a1a1a" stroke-width="0.16" >-153.631, 50.548</text>
<rect x="377.00" y="458.00" width="10.00" height="9.50" fill="#e4e4e4" stroke="#a8a8a8" stroke-width="0.6" />
<text x="382.00" y="464.80" font-family='"Liberation Mono", monospace' font-size="5" fill="#222" text-anchor="middle" stroke="#222" stroke-width="0.16" >mm</text>
<rect x="390.00" y="458.00" width="8.50" height="9.50" fill="#e4e4e4" stroke="#a8a8a8" stroke-width="0.6" />
<text x="394.25" y="464.80" font-family='"Liberation Mono", monospace' font-size="5" fill="#222" text-anchor="middle" stroke="#222" stroke-width="0.16" >P</text>
<rect x="403.50" y="458.00" width="8.50" height="9.50" fill="#e4e4e4" stroke="#a8a8a8" stroke-width="0.6" />
<text x="407.75" y="464.80" font-family='"Liberation Mono", monospace' font-size="5" fill="#222" text-anchor="middle" stroke="#222" stroke-width="0.16" >A</text>
<text x="567.00" y="465.20" font-family='"Liberation Mono", monospace' font-size="5.6" fill="#1a1a1a" textLength="11.50" lengthAdjust="spacingAndGlyphs" stroke="#1a1a1a" stroke-width="0.16" >None</text>
<text x="642.00" y="465.20" font-family='"Liberation Mono", monospace' font-size="5.6" fill="#8a8a8a" textLength="8.00" lengthAdjust="spacingAndGlyphs" stroke="#8a8a8a" stroke-width="0.16" >N/A</text>
<rect x="716.25" y="457.50" width="73.00" height="10.10" fill="#ffff00" />
<text x="717.00" y="464.80" font-family='"Liberation Mono", monospace' font-size="4.6" fill="#222" textLength="8.00" lengthAdjust="spacingAndGlyphs" stroke="#222" stroke-width="0.16" >DRC</text>
<text x="791.80" y="465.20" font-family='"Liberation Mono", monospace' font-size="5.4" fill="#333" stroke="#333" stroke-width="0.16" >0</text>
<rect x="700.00" y="37.00" width="165.00" height="191.00" fill="#f0f0f0" />
<line x1="699.60" y1="37.00" x2="699.60" y2="393.00" stroke="#c8c8c8" stroke-width="0.6" />
<text x="709.00" y="43.10" font-family='"Liberation Mono", monospace' font-size="5.6" fill="#222" textLength="28.50" lengthAdjust="spacingAndGlyphs" stroke="#222" stroke-width="0.16" >Visibility</text>
<line x1="738.00" y1="41.40" x2="834.70" y2="41.40" stroke="#adadad" stroke-width="1.2" />
<line x1="738.00" y1="42.30" x2="834.70" y2="42.30" stroke="#ffffff" stroke-width="0.5" />
<line x1="840.50" y1="43.30" x2="843.50" y2="43.30" stroke="#222" stroke-width="1" />
<rect x="848.80" y="40.50" width="2.60" height="3.00" fill="#f0f0f0" stroke="#222" stroke-width="0.8" />
<path d="M849.9 40.5 v-1.1 h2.7 v2.9 h-1.1" fill="none" stroke="#222" stroke-width="0.75"/>
<path d="M856.9 39.900000000000006 l3.5 3.5 M860.4 39.900000000000006 l-3.5 3.5" stroke="#111" stroke-width="1.05"/>
<text x="705.60" y="61.60" font-family='"Liberation Mono", monospace' font-size="5.6" fill="#1a1a1a" textLength="46.50" lengthAdjust="spacingAndGlyphs" stroke="#1a1a1a" stroke-width="0.16" >Global visibility</text>
<rect x="755.00" y="55.00" width="32.60" height="9.00" fill="#e6e6e6" stroke="#b4b4b4" stroke-width="0.6" />
<text x="768.30" y="61.60" font-family='"Liberation Mono", monospace' font-size="5.6" fill="#1a1a1a" textLength="6.00" lengthAdjust="spacingAndGlyphs" stroke="#1a1a1a" stroke-width="0.16" >On</text>
<rect x="791.40" y="55.00" width="32.60" height="9.00" fill="#e6e6e6" stroke="#b4b4b4" stroke-width="0.6" />
<text x="803.70" y="61.60" font-family='"Liberation Mono", monospace' font-size="5.6" fill="#1a1a1a" textLength="8.00" lengthAdjust="spacingAndGlyphs" stroke="#1a1a1a" stroke-width="0.16" >Off</text>
<rect x="828.00" y="55.00" width="32.60" height="9.00" fill="#e6e6e6" stroke="#b4b4b4" stroke-width="0.6" />
<text x="838.80" y="61.60" font-family='"Liberation Mono", monospace' font-size="5.6" fill="#1a1a1a" textLength="11.00" lengthAdjust="spacingAndGlyphs" stroke="#1a1a1a" stroke-width="0.16" >Last</text>
<text x="705.60" y="74.20" font-family='"Liberation Mono", monospace' font-size="5.6" fill="#1a1a1a" textLength="10.50" lengthAdjust="spacingAndGlyphs" stroke="#1a1a1a" stroke-width="0.16" >View</text>
<rect x="754.40" y="68.00" width="106.60" height="8.20" fill="#e4e4e4" stroke="#b4b4b4" stroke-width="0.6" />
<text x="757.00" y="74.20" font-family='"Liberation Mono", monospace' font-size="5.6" fill="#1a1a1a" textLength="27.00" lengthAdjust="spacingAndGlyphs" stroke="#1a1a1a" stroke-width="0.16" >File: adtt</text>
<path d="M855.6 71.2 h3.4 l-1.7 2z" fill="#222"/>
<text x="706.60" y="90.80" font-family='"Liberation Mono", monospace' font-size="5.4" fill="#1a1a1a" textLength="13.50" lengthAdjust="spacingAndGlyphs" stroke="#1a1a1a" stroke-width="0.16" >Layer</text>
<line x1="706.60" y1="91.70" x2="720.10" y2="91.70" stroke="#1a1a1a" stroke-width="0.5" />
<text x="784.00" y="90.80" font-family='"Liberation Mono", monospace' font-size="5.4" fill="#1a1a1a" textLength="10.40" lengthAdjust="spacingAndGlyphs" stroke="#1a1a1a" stroke-width="0.16" >Plan</text>
<line x1="784.00" y1="91.70" x2="794.40" y2="91.70" stroke="#1a1a1a" stroke-width="0.5" />
<text x="796.40" y="90.80" font-family='"Liberation Mono", monospace' font-size="5.4" fill="#1a1a1a" textLength="10.60" lengthAdjust="spacingAndGlyphs" stroke="#1a1a1a" stroke-width="0.16" >Etch</text>
<line x1="796.40" y1="91.70" x2="807.00" y2="91.70" stroke="#1a1a1a" stroke-width="0.5" />
<text x="809.60" y="90.80" font-family='"Liberation Mono", monospace' font-size="5.4" fill="#1a1a1a" textLength="8.00" lengthAdjust="spacingAndGlyphs" stroke="#1a1a1a" stroke-width="0.16" >Via</text>
<line x1="809.60" y1="91.70" x2="817.60" y2="91.70" stroke="#1a1a1a" stroke-width="0.5" />
<text x="820.40" y="90.80" font-family='"Liberation Mono", monospace' font-size="5.4" fill="#1a1a1a" textLength="8.00" lengthAdjust="spacingAndGlyphs" stroke="#1a1a1a" stroke-width="0.16" >Pin</text>
<line x1="820.40" y1="91.70" x2="828.40" y2="91.70" stroke="#1a1a1a" stroke-width="0.5" />
<text x="831.00" y="90.80" font-family='"Liberation Mono", monospace' font-size="5.4" fill="#1a1a1a" textLength="8.40" lengthAdjust="spacingAndGlyphs" stroke="#1a1a1a" stroke-width="0.16" >Drc</text>
<line x1="831.00" y1="91.70" x2="839.40" y2="91.70" stroke="#1a1a1a" stroke-width="0.5" />
<text x="843.00" y="90.80" font-family='"Liberation Mono", monospace' font-size="5.4" fill="#1a1a1a" textLength="7.60" lengthAdjust="spacingAndGlyphs" stroke="#1a1a1a" stroke-width="0.16" >All</text>
<line x1="843.00" y1="91.70" x2="850.60" y2="91.70" stroke="#1a1a1a" stroke-width="0.5" />
<rect x="706.70" y="93.60" width="6.00" height="6.00" fill="#ffffff" stroke="#555" stroke-width="0.7" rx="0.6" />
<path d="M707.8000000000001 96.6 l1.3 1.5 l2.6 -3.2" fill="none" stroke="#222" stroke-width="0.8"/>
<text x="714.60" y="98.60" font-family='"Liberation Mono", monospace' font-size="5.6" fill="#1a1a1a" textLength="27.50" lengthAdjust="spacingAndGlyphs" stroke="#1a1a1a" stroke-width="0.16" >Conductors</text>
<rect x="786.30" y="93.50" width="6.20" height="6.20" fill="#ffffff" stroke="#555" stroke-width="0.7" rx="0.6" />
<rect x="798.50" y="93.50" width="6.20" height="6.20" fill="#ffffff" stroke="#555" stroke-width="0.7" rx="0.6" />
<rect x="810.50" y="93.50" width="6.20" height="6.20" fill="#ffffff" stroke="#555" stroke-width="0.7" rx="0.6" />
<rect x="821.10" y="93.50" width="6.20" height="6.20" fill="#ffffff" stroke="#555" stroke-width="0.7" rx="0.6" />
<rect x="831.90" y="93.50" width="6.20" height="6.20" fill="#ffffff" stroke="#555" stroke-width="0.7" rx="0.6" />
<rect x="843.50" y="93.50" width="6.20" height="6.20" fill="#ffffff" stroke="#555" stroke-width="0.7" rx="0.6" />
<rect x="706.70" y="102.60" width="6.00" height="6.00" fill="#ffffff" stroke="#555" stroke-width="0.7" rx="0.6" />
<path d="M707.8000000000001 105.6 l1.3 1.5 l2.6 -3.2" fill="none" stroke="#222" stroke-width="0.8"/>
<text x="714.60" y="107.60" font-family='"Liberation Mono", monospace' font-size="5.6" fill="#1a1a1a" textLength="16.50" lengthAdjust="spacingAndGlyphs" stroke="#1a1a1a" stroke-width="0.16" >Planes</text>
<rect x="786.30" y="102.50" width="6.20" height="6.20" fill="#ffffff" stroke="#555" stroke-width="0.7" rx="0.6" />
<rect x="798.50" y="102.50" width="6.20" height="6.20" fill="#ffffff" stroke="#555" stroke-width="0.7" rx="0.6" />
<rect x="810.50" y="102.50" width="6.20" height="6.20" fill="#ffffff" stroke="#555" stroke-width="0.7" rx="0.6" />
<rect x="821.10" y="102.50" width="6.20" height="6.20" fill="#ffffff" stroke="#555" stroke-width="0.7" rx="0.6" />
<rect x="831.90" y="102.50" width="6.20" height="6.20" fill="#ffffff" stroke="#555" stroke-width="0.7" rx="0.6" />
<rect x="843.50" y="102.50" width="6.20" height="6.20" fill="#ffffff" stroke="#555" stroke-width="0.7" rx="0.6" />
<rect x="706.70" y="111.60" width="6.00" height="6.00" fill="#ffffff" stroke="#555" stroke-width="0.7" rx="0.6" />
<path d="M707.8000000000001 114.6 l1.3 1.5 l2.6 -3.2" fill="none" stroke="#222" stroke-width="0.8"/>
<text x="714.60" y="116.60" font-family='"Liberation Mono", monospace' font-size="5.6" fill="#1a1a1a" textLength="14.00" lengthAdjust="spacingAndGlyphs" stroke="#1a1a1a" stroke-width="0.16" >Masks</text>
<rect x="786.30" y="111.50" width="6.20" height="6.20" fill="#ffffff" stroke="#555" stroke-width="0.7" rx="0.6" />
<rect x="798.50" y="111.50" width="6.20" height="6.20" fill="#ffffff" stroke="#555" stroke-width="0.7" rx="0.6" />
<rect x="810.50" y="111.50" width="6.20" height="6.20" fill="#ffffff" stroke="#555" stroke-width="0.7" rx="0.6" />
<rect x="821.10" y="111.50" width="6.20" height="6.20" fill="#ffffff" stroke="#555" stroke-width="0.7" rx="0.6" />
<rect x="831.90" y="111.50" width="6.20" height="6.20" fill="#ffffff" stroke="#555" stroke-width="0.7" rx="0.6" />
<rect x="843.50" y="111.50" width="6.20" height="6.20" fill="#ffffff" stroke="#555" stroke-width="0.7" rx="0.6" />
<text x="706.60" y="125.20" font-family='"Liberation Mono", monospace' font-size="5.6" fill="#1a1a1a" textLength="26.50" lengthAdjust="spacingAndGlyphs" stroke="#1a1a1a" stroke-width="0.16" >All Layers</text>
<rect x="786.30" y="120.10" width="6.20" height="6.20" fill="#ffffff" stroke="#555" stroke-width="0.7" rx="0.6" />
<rect x="798.50" y="120.10" width="6.20" height="6.20" fill="#ffffff" stroke="#555" stroke-width="0.7" rx="0.6" />
<rect x="810.50" y="120.10" width="6.20" height="6.20" fill="#ffffff" stroke="#555" stroke-width="0.7" rx="0.6" />
<rect x="821.10" y="120.10" width="6.20" height="6.20" fill="#ffffff" stroke="#555" stroke-width="0.7" rx="0.6" />
<rect x="831.90" y="120.10" width="6.20" height="6.20" fill="#ffffff" stroke="#555" stroke-width="0.7" rx="0.6" />
<rect x="843.50" y="120.10" width="6.20" height="6.20" fill="#ffffff" stroke="#555" stroke-width="0.7" rx="0.6" />
<rect x="706.50" y="128.40" width="146.00" height="1.40" fill="#7a7a7a" />
<text x="706.60" y="136.70" font-family='"Liberation Mono", monospace' font-size="5.6" fill="#1a1a1a" textLength="7.50" lengthAdjust="spacingAndGlyphs" stroke="#1a1a1a" stroke-width="0.16" >Top</text>
<rect x="786.00" y="131.30" width="6.80" height="6.80" fill="#22ee22" stroke="#d8d8d8" stroke-width="0.8" />
<rect x="798.20" y="131.30" width="6.80" height="6.80" fill="#ee1c1c" stroke="#d8d8d8" stroke-width="0.8" />
<rect x="810.20" y="131.30" width="6.80" height="6.80" fill="#ee1c1c" stroke="#d8d8d8" stroke-width="0.8" />
<rect x="820.80" y="131.30" width="6.80" height="6.80" fill="#ee1c1c" stroke="#d8d8d8" stroke-width="0.8" />
<rect x="831.60" y="131.30" width="6.80" height="6.80" fill="#000000" stroke="#d8d8d8" stroke-width="0.8" />
<rect x="843.50" y="131.60" width="6.20" height="6.20" fill="#ffffff" stroke="#555" stroke-width="0.7" rx="0.6" />
<rect x="706.50" y="139.50" width="146.00" height="9.00" fill="#e2e2e2" />
<text x="706.60" y="146.00" font-family='"Liberation Mono", monospace' font-size="5.6" fill="#1a1a1a" textLength="5.00" lengthAdjust="spacingAndGlyphs" stroke="#1a1a1a" stroke-width="0.16" >L2</text>
<rect x="786.00" y="140.60" width="6.80" height="6.80" fill="#000000" stroke="#d8d8d8" stroke-width="0.8" />
<rect x="798.20" y="140.60" width="6.80" height="6.80" fill="#000000" stroke="#d8d8d8" stroke-width="0.8" />
<rect x="810.20" y="140.60" width="6.80" height="6.80" fill="#000000" stroke="#d8d8d8" stroke-width="0.8" />
<rect x="820.80" y="140.60" width="6.80" height="6.80" fill="#000000" stroke="#d8d8d8" stroke-width="0.8" />
<rect x="831.60" y="140.60" width="6.80" height="6.80" fill="#000000" stroke="#d8d8d8" stroke-width="0.8" />
<rect x="843.50" y="140.90" width="6.20" height="6.20" fill="#ffffff" stroke="#555" stroke-width="0.7" rx="0.6" />
<text x="706.60" y="155.00" font-family='"Liberation Mono", monospace' font-size="5.6" fill="#1a1a1a" textLength="5.00" lengthAdjust="spacingAndGlyphs" stroke="#1a1a1a" stroke-width="0.16" >L3</text>
<rect x="786.00" y="149.60" width="6.80" height="6.80" fill="#000000" stroke="#d8d8d8" stroke-width="0.8" />
<rect x="798.20" y="149.60" width="6.80" height="6.80" fill="#000000" stroke="#d8d8d8" stroke-width="0.8" />
<rect x="810.20" y="149.60" width="6.80" height="6.80" fill="#000000" stroke="#d8d8d8" stroke-width="0.8" />
<rect x="820.80" y="149.60" width="6.80" height="6.80" fill="#000000" stroke="#d8d8d8" stroke-width="0.8" />
<rect x="831.60" y="149.60" width="6.80" height="6.80" fill="#000000" stroke="#d8d8d8" stroke-width="0.8" />
<rect x="843.50" y="149.90" width="6.20" height="6.20" fill="#ffffff" stroke="#555" stroke-width="0.7" rx="0.6" />
<rect x="706.50" y="157.50" width="146.00" height="9.00" fill="#e2e2e2" />
<text x="706.60" y="164.00" font-family='"Liberation Mono", monospace' font-size="5.6" fill="#1a1a1a" textLength="5.00" lengthAdjust="spacingAndGlyphs" stroke="#1a1a1a" stroke-width="0.16" >L4</text>
<rect x="786.00" y="158.60" width="6.80" height="6.80" fill="#000000" stroke="#d8d8d8" stroke-width="0.8" />
<rect x="798.20" y="158.60" width="6.80" height="6.80" fill="#000000" stroke="#d8d8d8" stroke-width="0.8" />
<rect x="810.20" y="158.60" width="6.80" height="6.80" fill="#000000" stroke="#d8d8d8" stroke-width="0.8" />
<rect x="820.80" y="158.60" width="6.80" height="6.80" fill="#000000" stroke="#d8d8d8" stroke-width="0.8" />
<rect x="831.60" y="158.60" width="6.80" height="6.80" fill="#000000" stroke="#d8d8d8" stroke-width="0.8" />
<rect x="843.50" y="158.90" width="6.20" height="6.20" fill="#ffffff" stroke="#555" stroke-width="0.7" rx="0.6" />
<text x="706.60" y="173.00" font-family='"Liberation Mono", monospace' font-size="5.6" fill="#1a1a1a" textLength="5.00" lengthAdjust="spacingAndGlyphs" stroke="#1a1a1a" stroke-width="0.16" >L5</text>
<rect x="786.00" y="167.60" width="6.80" height="6.80" fill="#000000" stroke="#d8d8d8" stroke-width="0.8" />
<rect x="798.20" y="167.60" width="6.80" height="6.80" fill="#000000" stroke="#d8d8d8" stroke-width="0.8" />
<rect x="810.20" y="167.60" width="6.80" height="6.80" fill="#000000" stroke="#d8d8d8" stroke-width="0.8" />
<rect x="820.80" y="167.60" width="6.80" height="6.80" fill="#000000" stroke="#d8d8d8" stroke-width="0.8" />
<rect x="831.60" y="167.60" width="6.80" height="6.80" fill="#000000" stroke="#d8d8d8" stroke-width="0.8" />
<rect x="843.50" y="167.90" width="6.20" height="6.20" fill="#ffffff" stroke="#555" stroke-width="0.7" rx="0.6" />
<rect x="706.50" y="175.50" width="146.00" height="9.00" fill="#e2e2e2" />
<text x="706.60" y="182.00" font-family='"Liberation Mono", monospace' font-size="5.6" fill="#1a1a1a" textLength="16.00" lengthAdjust="spacingAndGlyphs" stroke="#1a1a1a" stroke-width="0.16" >Bottom</text>
<rect x="786.00" y="176.60" width="6.80" height="6.80" fill="#000000" stroke="#d8d8d8" stroke-width="0.8" />
<rect x="798.20" y="176.60" width="6.80" height="6.80" fill="#000000" stroke="#d8d8d8" stroke-width="0.8" />
<rect x="810.20" y="176.60" width="6.80" height="6.80" fill="#000000" stroke="#d8d8d8" stroke-width="0.8" />
<rect x="820.80" y="176.60" width="6.80" height="6.80" fill="#000000" stroke="#d8d8d8" stroke-width="0.8" />
<rect x="831.60" y="176.60" width="6.80" height="6.80" fill="#000000" stroke="#d8d8d8" stroke-width="0.8" />
<rect x="843.50" y="176.90" width="6.20" height="6.20" fill="#ffffff" stroke="#555" stroke-width="0.7" rx="0.6" />
<text x="706.60" y="191.30" font-family='"Liberation Mono", monospace' font-size="5.6" fill="#1a1a1a" textLength="29.50" lengthAdjust="spacingAndGlyphs" stroke="#1a1a1a" stroke-width="0.16" >Through All</text>
<rect x="786.00" y="185.90" width="6.80" height="6.80" fill="#000000" stroke="#d8d8d8" stroke-width="0.8" />
<rect x="831.60" y="185.90" width="6.80" height="6.80" fill="#000000" stroke="#d8d8d8" stroke-width="0.8" />
<rect x="843.50" y="186.20" width="6.20" height="6.20" fill="#ffffff" stroke="#555" stroke-width="0.7" rx="0.6" />
<rect x="706.50" y="194.60" width="146.00" height="1.20" fill="#7a7a7a" />
<text x="779.60" y="203.20" font-family='"Liberation Mono", monospace' font-size="5.4" fill="#1a1a1a" textLength="81.50" lengthAdjust="spacingAndGlyphs" text-anchor="middle" stroke="#1a1a1a" stroke-width="0.16" >Class/Subclass (user selected)</text>
<line x1="738.80" y1="204.20" x2="820.40" y2="204.20" stroke="#1a1a1a" stroke-width="0.5" />
<rect x="706.50" y="205.00" width="146.00" height="8.80" fill="#e2e2e2" />
<text x="706.60" y="211.30" font-family='"Liberation Mono", monospace' font-size="5.6" fill="#1a1a1a" textLength="62.50" lengthAdjust="spacingAndGlyphs" stroke="#1a1a1a" stroke-width="0.16" >Ref Des/Assembly_Bottom</text>
<rect x="842.20" y="206.00" width="6.80" height="6.80" fill="#000" stroke="#d8d8d8" stroke-width="0.8" />
<rect x="746.00" y="216.00" width="6.00" height="6.00" fill="#ffffff" stroke="#555" stroke-width="0.7" rx="0.6" />
<text x="754.50" y="221.00" font-family='"Liberation Mono", monospace' font-size="5.6" fill="#1a1a1a" textLength="64.50" lengthAdjust="spacingAndGlyphs" stroke="#1a1a1a" stroke-width="0.16" >Enable layer select mode</text>
<rect x="854.40" y="84.00" width="6.20" height="130.00" fill="#f0f0f0" />
<path d="M855.8 90 l1.7 -1.7 l1.7 1.7 M855.8 208.4 l1.7 1.7 l1.7 -1.7" fill="none" stroke="#333" stroke-width="0.8"/>
<rect x="854.60" y="92.00" width="5.80" height="64.00" fill="#cdcdcd" />
<rect x="856.20" y="121.60" width="2.60" height="3.00" fill="#f4f4f4" />
<text x="709.30" y="233.40" font-family='"Liberation Mono", monospace' font-size="5.6" fill="#222" textLength="19.50" lengthAdjust="spacingAndGlyphs" stroke="#222" stroke-width="0.16" >Options</text>
<line x1="729.30" y1="231.70" x2="835.00" y2="231.70" stroke="#adadad" stroke-width="1.2" />
<line x1="729.30" y1="232.60" x2="835.00" y2="232.60" stroke="#ffffff" stroke-width="0.5" />
<line x1="840.50" y1="233.60" x2="843.50" y2="233.60" stroke="#222" stroke-width="1" />
<rect x="848.80" y="230.80" width="2.60" height="3.00" fill="#f0f0f0" stroke="#222" stroke-width="0.8" />
<path d="M849.9 230.8 v-1.1 h2.7 v2.9 h-1.1" fill="none" stroke="#222" stroke-width="0.75"/>
<path d="M856.9 230.2 l3.5 3.5 M860.4 230.2 l-3.5 3.5" stroke="#111" stroke-width="1.05"/>
<rect x="702.50" y="237.00" width="163.50" height="218.75" fill="#f0f0f0" stroke="#fdfdfd" stroke-width="0.8" />
<line x1="702.50" y1="455.90" x2="865.00" y2="455.90" stroke="#b8b8b8" stroke-width="0.7" />
<line x1="702.40" y1="237.00" x2="702.40" y2="456.00" stroke="#b6b6b6" stroke-width="0.9" />
<line x1="864.40" y1="237.00" x2="864.40" y2="456.00" stroke="#a4a4a4" stroke-width="0.9" />
<line x1="702.50" y1="236.60" x2="865.00" y2="236.60" stroke="#d8d8d8" stroke-width="0.6" />
<text x="706.30" y="258.20" font-family='"Liberation Sans", sans-serif' font-size="5.5" fill="#222" textLength="58.00" lengthAdjust="spacingAndGlyphs" >Active Class and Subclass:</text>
<rect x="718.90" y="267.40" width="67.70" height="9.20" fill="#e2e2e2" stroke="#adadad" stroke-width="0.6" />
<text x="721.00" y="274.00" font-family='"Liberation Sans", sans-serif' font-size="5.5" fill="#222" textLength="10.00" lengthAdjust="spacingAndGlyphs" >Etch</text>
<path d="M780.6 271 l1.7 1.7 l1.7 -1.7" fill="none" stroke="#444" stroke-width="0.6"/>
<rect x="718.90" y="283.20" width="67.70" height="9.30" fill="#ffffff" stroke="#8a8a8a" stroke-width="0.6" />
<rect x="721.30" y="285.60" width="2.60" height="4.60" fill="#18a8d8" stroke="#0a6a9a" stroke-width="0.4" />
<text x="726.00" y="289.90" font-family='"Liberation Sans", sans-serif' font-size="5.5" fill="#222" textLength="5.50" lengthAdjust="spacingAndGlyphs" >L4</text>
<path d="M780.6 287 l1.7 1.7 l1.7 -1.7" fill="none" stroke="#444" stroke-width="0.6"/>
<rect x="710.50" y="285.30" width="5.70" height="5.70" fill="#000" stroke="#bdbdbd" stroke-width="0.8" />
<rect x="786.00" y="345.10" width="78.00" height="12.10" fill="#fdfdfd" stroke="#dfe7f3" stroke-width="0.6" rx="2" />
<g transform="translate(0.9 0.2) rotate(-9 790.8 350.4)"><rect x="784.6" y="343.7" width="12.8" height="13.2" rx="2.4" fill="#f4551c"/><path d="M794.2 347.2 c-1.6 -1.4 -5.8 -1.2 -5.8 1 c0 2.5 6 1.3 6 3.8 c0 2.2 -4.6 2.2 -6.4 0.8" fill="none" stroke="#fff" stroke-width="1.8"/></g>
<text x="802.10" y="354.80" font-family='"Liberation Sans", sans-serif' font-size="8.6" fill="#2a7ae0" textLength="6.30" lengthAdjust="spacingAndGlyphs" stroke="#2a7ae0" stroke-width="0.3">A</text>
<g transform="translate(0 1.3)">
<circle cx="814.40" cy="348.80" r="0.90" fill="#2a7ae0" />
<path d="M817 351.4 q0.8 1 -0.6 2" stroke="#2a7ae0" stroke-width="0.9" fill="none"/>
<rect x="824.6" y="346.4" width="2.6" height="5" rx="1.3" fill="#2a7ae0"/><path d="M823.4 350 a2.5 2.5 0 0 0 5 0 M825.9 352.6 v1.8" stroke="#2a7ae0" stroke-width="0.7" fill="none"/>
<rect x="832.60" y="347.60" width="7.80" height="6.00" fill="#2a7ae0" rx="1" />
<path d="M833.8 349.6 h5.4 M833.8 351.6 h5.4" stroke="#dfeaff" stroke-width="0.7"/>
<path d="M843.8 348 l2 -1.4 h3.6 l2 1.4 l-1.2 1.6 l-0.8 -0.5 v4.6 h-3.6 v-4.6 l-0.8 0.5z" fill="#2a7ae0"/>
<rect x="856.60" y="347.40" width="2.60" height="2.60" fill="#2a7ae0" rx="0.5" />
<rect x="859.80" y="347.40" width="2.60" height="2.60" fill="#2a7ae0" rx="0.5" />
<rect x="856.60" y="350.60" width="2.60" height="2.60" fill="#2a7ae0" rx="0.5" />
<rect x="859.80" y="350.60" width="2.60" height="2.60" fill="#2a7ae0" rx="0.5" />
</g>
<clipPath id="canvasclip"><rect x="126.0" y="50.3" width="572.9" height="341.5"/></clipPath><g clip-path="url(#canvasclip)">
<rect x="124.00" y="48.30" width="576.90" height="345.50" fill="#1a1a1a" />
<rect x="266.20" y="31.95" width="71.35" height="73.60" fill="#7c7c7c" rx="8.05" />
<rect x="329.45" y="31.95" width="44.35" height="73.60" fill="#7c7c7c" rx="8.05" />
<rect x="366.45" y="31.95" width="44.60" height="73.60" fill="#7c7c7c" rx="8.05" />
<rect x="441.20" y="31.95" width="44.35" height="73.60" fill="#7c7c7c" rx="8.05" />
<rect x="478.20" y="31.95" width="71.10" height="73.60" fill="#7c7c7c" rx="8.05" />
<rect x="266.20" y="97.55" width="71.35" height="44.25" fill="#7c7c7c" rx="8.05" />
<rect x="478.20" y="97.55" width="71.10" height="44.25" fill="#7c7c7c" rx="8.05" />
<rect x="266.20" y="134.95" width="71.35" height="44.00" fill="#7c7c7c" rx="8.05" />
<rect x="478.20" y="134.95" width="71.10" height="44.00" fill="#7c7c7c" rx="8.05" />
<rect x="266.20" y="171.95" width="71.35" height="44.10" fill="#7c7c7c" rx="8.05" />
<rect x="478.20" y="171.95" width="71.10" height="44.10" fill="#7c7c7c" rx="8.05" />
<rect x="266.20" y="209.45" width="71.35" height="44.10" fill="#7c7c7c" rx="8.05" />
<rect x="478.20" y="209.45" width="71.10" height="44.10" fill="#7c7c7c" rx="8.05" />
<rect x="266.20" y="246.45" width="71.35" height="71.10" fill="#7c7c7c" rx="8.05" />
<rect x="478.20" y="246.45" width="71.10" height="70.35" fill="#7c7c7c" rx="8.05" />
<rect x="366.45" y="246.45" width="44.60" height="70.35" fill="#7c7c7c" rx="8.05" />
<rect x="403.95" y="246.45" width="44.10" height="70.35" fill="#7c7c7c" rx="8.05" />
<rect x="441.20" y="246.45" width="44.35" height="70.35" fill="#7c7c7c" rx="8.05" />
<rect x="197.15" y="163.95" width="53.30" height="63.70" fill="#7c7c7c" rx="8.05" />
<rect x="197.35" y="241.75" width="53.20" height="60.80" fill="#7c7c7c" rx="8.05" />
<rect x="137.70" y="301.45" width="53.35" height="60.60" fill="#7c7c7c" rx="8.05" />
<rect x="197.45" y="301.45" width="53.10" height="60.60" fill="#7c7c7c" rx="8.05" />
<rect x="137.70" y="361.45" width="53.35" height="46.60" fill="#7c7c7c" rx="8.05" />
<rect x="197.45" y="361.45" width="53.10" height="46.60" fill="#7c7c7c" rx="8.05" />
<rect x="253.20" y="364.95" width="52.85" height="43.10" fill="#7c7c7c" rx="8.05" />
<rect x="576.95" y="31.95" width="54.10" height="28.50" fill="#7c7c7c" rx="8.05" />
<rect x="636.95" y="31.95" width="53.10" height="28.50" fill="#7c7c7c" rx="8.05" />
<rect x="576.95" y="59.45" width="54.10" height="60.60" fill="#7c7c7c" rx="8.05" />
<rect x="636.95" y="59.45" width="53.10" height="60.60" fill="#7c7c7c" rx="8.05" />
<rect x="576.95" y="119.45" width="54.10" height="59.85" fill="#7c7c7c" rx="8.05" />
<rect x="576.95" y="178.95" width="54.10" height="60.35" fill="#7c7c7c" rx="8.05" />
<rect x="566.45" y="270.70" width="93.60" height="55.35" fill="#7c7c7c" rx="8.05" />
<rect x="566.45" y="367.70" width="93.60" height="40.35" fill="#7c7c7c" rx="8.05" />
<circle cx="220.00" cy="82.00" r="26.55" fill="#7c7c7c" />
<circle cx="272.50" cy="343.00" r="26.55" fill="#7c7c7c" />
<circle cx="383.75" cy="342.50" r="26.55" fill="#7c7c7c" />
<circle cx="458.25" cy="342.50" r="26.55" fill="#7c7c7c" />
<circle cx="519.25" cy="342.50" r="26.55" fill="#7c7c7c" />
<circle cx="563.75" cy="197.50" r="26.55" fill="#7c7c7c" />
<circle cx="695.00" cy="280.00" r="26.55" fill="#7c7c7c" />
<circle cx="695.00" cy="346.00" r="26.55" fill="#7c7c7c" />
<circle cx="673.75" cy="393.50" r="26.55" fill="#7c7c7c" />
<polyline points="220.00,82.00 262.00,124.00" fill="none" stroke="#7c7c7c" stroke-width="26.1" stroke-linecap="round" stroke-linejoin="round" />
<polyline points="262.00,196.50 298.00,196.50 304.00,193.00" fill="none" stroke="#7c7c7c" stroke-width="26.6" stroke-linecap="round" stroke-linejoin="round" />
<polyline points="224.50,332.00 224.50,272.50 283.00,272.50 297.00,286.00" fill="none" stroke="#7c7c7c" stroke-width="26.5" stroke-linecap="round" stroke-linejoin="round" />
<polyline points="164.60,332.00 164.60,400.00" fill="none" stroke="#7c7c7c" stroke-width="48.300000000000004" stroke-linecap="round" stroke-linejoin="round" />
<polyline points="224.00,390.00 280.00,390.00" fill="none" stroke="#7c7c7c" stroke-width="23.6" stroke-linecap="round" stroke-linejoin="round" />
<polyline points="296.75,40.00 296.75,71.00" fill="none" stroke="#7c7c7c" stroke-width="25.1" stroke-linecap="round" stroke-linejoin="round" />
<polyline points="346.75,40.00 346.75,64.50" fill="none" stroke="#7c7c7c" stroke-width="32.6" stroke-linecap="round" stroke-linejoin="round" />
<polyline points="386.50,40.00 386.50,60.00" fill="none" stroke="#7c7c7c" stroke-width="31.1" stroke-linecap="round" stroke-linejoin="round" />
<polyline points="458.25,40.00 458.25,70.00" fill="none" stroke="#7c7c7c" stroke-width="26.1" stroke-linecap="round" stroke-linejoin="round" />
<polyline points="509.50,73.40 562.50,73.20 594.00,42.00" fill="none" stroke="#7c7c7c" stroke-width="27.1" stroke-linecap="round" stroke-linejoin="round" />
<polyline points="509.50,123.70 572.50,123.70 605.00,91.00" fill="none" stroke="#7c7c7c" stroke-width="26.1" stroke-linecap="round" stroke-linejoin="round" />
<polyline points="509.50,161.00 589.00,161.00 604.00,147.00" fill="none" stroke="#7c7c7c" stroke-width="25.900000000000002" stroke-linecap="round" stroke-linejoin="round" />
<polyline points="509.50,197.50 563.75,197.50" fill="none" stroke="#7c7c7c" stroke-width="26.1" stroke-linecap="round" stroke-linejoin="round" />
<polyline points="509.50,235.60 576.00,235.60 604.00,208.50" fill="none" stroke="#7c7c7c" stroke-width="26.1" stroke-linecap="round" stroke-linejoin="round" />
<polyline points="509.00,285.00 519.25,296.00 519.25,342.50" fill="none" stroke="#7c7c7c" stroke-width="26.1" stroke-linecap="round" stroke-linejoin="round" />
<polyline points="383.75,284.00 383.75,342.50" fill="none" stroke="#7c7c7c" stroke-width="26.1" stroke-linecap="round" stroke-linejoin="round" />
<polyline points="421.20,283.00 421.20,352.50 436.40,370.00 436.40,400.00" fill="none" stroke="#7c7c7c" stroke-width="26.1" stroke-linecap="round" stroke-linejoin="round" />
<polyline points="458.25,283.00 458.25,342.50" fill="none" stroke="#7c7c7c" stroke-width="26.1" stroke-linecap="round" stroke-linejoin="round" />
<polyline points="611.00,298.75 677.50,298.75 695.00,280.00" fill="none" stroke="#7c7c7c" stroke-width="25.6" stroke-linecap="round" stroke-linejoin="round" />
<polyline points="664.00,40.00 664.00,90.00" fill="none" stroke="#7c7c7c" stroke-width="48.6" stroke-linecap="round" stroke-linejoin="round" />
<polyline points="616.00,397.00 671.00,397.00" fill="none" stroke="#7c7c7c" stroke-width="51.1" stroke-linecap="round" stroke-linejoin="round" />
<polyline points="695.00,280.00 699.00,232.00" fill="none" stroke="#7c7c7c" stroke-width="26.1" stroke-linecap="round" stroke-linejoin="round" />
<rect x="180.45" y="171.45" width="26.10" height="48.70" fill="#7c7c7c" rx="1.55" />
<rect x="180.45" y="249.25" width="26.10" height="45.80" fill="#7c7c7c" rx="1.55" />
<rect x="138.05" y="301.45" width="12.50" height="99.10" fill="#7c7c7c" rx="6.55" />
<rect x="540.45" y="39.45" width="45.10" height="207.10" fill="#7c7c7c" rx="3.55" />
<rect x="619.45" y="39.45" width="29.10" height="79.10" fill="#7c7c7c" rx="3.55" />
<rect x="576.45" y="109.45" width="53.10" height="21.10" fill="#7c7c7c" rx="2.55" />
<rect x="576.45" y="168.45" width="53.10" height="22.10" fill="#7c7c7c" rx="2.55" />
<polyline points="220.00,82.00 239.00,101.00" fill="none" stroke="#7c7c7c" stroke-width="32.1" stroke-linecap="round" stroke-linejoin="round" />
<rect x="394.45" y="307.45" width="53.10" height="39.10" fill="#7c7c7c" rx="3.55" />
<rect x="620.45" y="124.45" width="26.10" height="49.10" fill="#7c7c7c" rx="3.55" />
<rect x="620.45" y="184.45" width="26.10" height="49.10" fill="#7c7c7c" rx="3.55" />
<rect x="239.45" y="299.45" width="23.10" height="101.10" fill="#7c7c7c" rx="3.55" />
<rect x="180.45" y="301.45" width="32.10" height="99.10" fill="#7c7c7c" rx="1.55" />
<rect x="239.45" y="295.45" width="37.10" height="35.10" fill="#7c7c7c" rx="2.55" />
<rect x="297.45" y="365.45" width="24.10" height="35.10" fill="#7c7c7c" rx="2.55" />
<rect x="261.45" y="309.45" width="35.60" height="63.10" fill="#7c7c7c" rx="3.55" />
<rect x="196.45" y="349.45" width="56.10" height="25.10" fill="#7c7c7c" rx="1.55" />
<rect x="240.45" y="261.45" width="35.10" height="39.10" fill="#7c7c7c" rx="3.55" />
<rect x="401.45" y="299.45" width="49.10" height="31.10" fill="#7c7c7c" rx="3.55" />
<rect x="249.45" y="164.45" width="21.10" height="41.10" fill="#7c7c7c" rx="2.55" />
<rect x="266.75" y="32.50" width="70.25" height="72.50" fill="#000000" rx="7.5" />
<rect x="330.00" y="32.50" width="43.25" height="72.50" fill="#000000" rx="7.5" />
<rect x="367.00" y="32.50" width="43.50" height="72.50" fill="#000000" rx="7.5" />
<rect x="441.75" y="32.50" width="43.25" height="72.50" fill="#000000" rx="7.5" />
<rect x="478.75" y="32.50" width="70.00" height="72.50" fill="#000000" rx="7.5" />
<rect x="266.75" y="98.10" width="70.25" height="43.15" fill="#000000" rx="7.5" />
<rect x="478.75" y="98.10" width="70.00" height="43.15" fill="#000000" rx="7.5" />
<rect x="266.75" y="135.50" width="70.25" height="42.90" fill="#000000" rx="7.5" />
<rect x="478.75" y="135.50" width="70.00" height="42.90" fill="#000000" rx="7.5" />
<rect x="266.75" y="172.50" width="70.25" height="43.00" fill="#000000" rx="7.5" />
<rect x="478.75" y="172.50" width="70.00" height="43.00" fill="#000000" rx="7.5" />
<rect x="266.75" y="210.00" width="70.25" height="43.00" fill="#000000" rx="7.5" />
<rect x="478.75" y="210.00" width="70.00" height="43.00" fill="#000000" rx="7.5" />
<rect x="266.75" y="247.00" width="70.25" height="70.00" fill="#000000" rx="7.5" />
<rect x="478.75" y="247.00" width="70.00" height="69.25" fill="#000000" rx="7.5" />
<rect x="367.00" y="247.00" width="43.50" height="69.25" fill="#000000" rx="7.5" />
<rect x="404.50" y="247.00" width="43.00" height="69.25" fill="#000000" rx="7.5" />
<rect x="441.75" y="247.00" width="43.25" height="69.25" fill="#000000" rx="7.5" />
<rect x="197.70" y="164.50" width="52.20" height="62.60" fill="#000000" rx="7.5" />
<rect x="197.90" y="242.30" width="52.10" height="59.70" fill="#000000" rx="7.5" />
<rect x="138.25" y="302.00" width="52.25" height="59.50" fill="#000000" rx="7.5" />
<rect x="198.00" y="302.00" width="52.00" height="59.50" fill="#000000" rx="7.5" />
<rect x="138.25" y="362.00" width="52.25" height="45.50" fill="#000000" rx="7.5" />
<rect x="198.00" y="362.00" width="52.00" height="45.50" fill="#000000" rx="7.5" />
<rect x="253.75" y="365.50" width="51.75" height="42.00" fill="#000000" rx="7.5" />
<rect x="577.50" y="32.50" width="53.00" height="27.40" fill="#000000" rx="7.5" />
<rect x="637.50" y="32.50" width="52.00" height="27.40" fill="#000000" rx="7.5" />
<rect x="577.50" y="60.00" width="53.00" height="59.50" fill="#000000" rx="7.5" />
<rect x="637.50" y="60.00" width="52.00" height="59.50" fill="#000000" rx="7.5" />
<rect x="577.50" y="120.00" width="53.00" height="58.75" fill="#000000" rx="7.5" />
<rect x="577.50" y="179.50" width="53.00" height="59.25" fill="#000000" rx="7.5" />
<rect x="567.00" y="271.25" width="92.50" height="54.25" fill="#000000" rx="7.5" />
<rect x="567.00" y="368.25" width="92.50" height="39.25" fill="#000000" rx="7.5" />
<circle cx="220.00" cy="82.00" r="26.00" fill="#000000" />
<circle cx="272.50" cy="343.00" r="26.00" fill="#000000" />
<circle cx="383.75" cy="342.50" r="26.00" fill="#000000" />
<circle cx="458.25" cy="342.50" r="26.00" fill="#000000" />
<circle cx="519.25" cy="342.50" r="26.00" fill="#000000" />
<circle cx="563.75" cy="197.50" r="26.00" fill="#000000" />
<circle cx="695.00" cy="280.00" r="26.00" fill="#000000" />
<circle cx="695.00" cy="346.00" r="26.00" fill="#000000" />
<circle cx="673.75" cy="393.50" r="26.00" fill="#000000" />
<polyline points="220.00,82.00 262.00,124.00" fill="none" stroke="#000000" stroke-width="25" stroke-linecap="round" stroke-linejoin="round" />
<polyline points="262.00,196.50 298.00,196.50 304.00,193.00" fill="none" stroke="#000000" stroke-width="25.5" stroke-linecap="round" stroke-linejoin="round" />
<polyline points="224.50,332.00 224.50,272.50 283.00,272.50 297.00,286.00" fill="none" stroke="#000000" stroke-width="25.4" stroke-linecap="round" stroke-linejoin="round" />
<polyline points="164.60,332.00 164.60,400.00" fill="none" stroke="#000000" stroke-width="47.2" stroke-linecap="round" stroke-linejoin="round" />
<polyline points="224.00,390.00 280.00,390.00" fill="none" stroke="#000000" stroke-width="22.5" stroke-linecap="round" stroke-linejoin="round" />
<polyline points="296.75,40.00 296.75,71.00" fill="none" stroke="#000000" stroke-width="24" stroke-linecap="round" stroke-linejoin="round" />
<polyline points="346.75,40.00 346.75,64.50" fill="none" stroke="#000000" stroke-width="31.5" stroke-linecap="round" stroke-linejoin="round" />
<polyline points="386.50,40.00 386.50,60.00" fill="none" stroke="#000000" stroke-width="30" stroke-linecap="round" stroke-linejoin="round" />
<polyline points="458.25,40.00 458.25,70.00" fill="none" stroke="#000000" stroke-width="25" stroke-linecap="round" stroke-linejoin="round" />
<polyline points="509.50,73.40 562.50,73.20 594.00,42.00" fill="none" stroke="#000000" stroke-width="26" stroke-linecap="round" stroke-linejoin="round" />
<polyline points="509.50,123.70 572.50,123.70 605.00,91.00" fill="none" stroke="#000000" stroke-width="25" stroke-linecap="round" stroke-linejoin="round" />
<polyline points="509.50,161.00 589.00,161.00 604.00,147.00" fill="none" stroke="#000000" stroke-width="24.8" stroke-linecap="round" stroke-linejoin="round" />
<polyline points="509.50,197.50 563.75,197.50" fill="none" stroke="#000000" stroke-width="25" stroke-linecap="round" stroke-linejoin="round" />
<polyline points="509.50,235.60 576.00,235.60 604.00,208.50" fill="none" stroke="#000000" stroke-width="25" stroke-linecap="round" stroke-linejoin="round" />
<polyline points="509.00,285.00 519.25,296.00 519.25,342.50" fill="none" stroke="#000000" stroke-width="25" stroke-linecap="round" stroke-linejoin="round" />
<polyline points="383.75,284.00 383.75,342.50" fill="none" stroke="#000000" stroke-width="25" stroke-linecap="round" stroke-linejoin="round" />
<polyline points="421.20,283.00 421.20,352.50 436.40,370.00 436.40,400.00" fill="none" stroke="#000000" stroke-width="25" stroke-linecap="round" stroke-linejoin="round" />
<polyline points="458.25,283.00 458.25,342.50" fill="none" stroke="#000000" stroke-width="25" stroke-linecap="round" stroke-linejoin="round" />
<polyline points="611.00,298.75 677.50,298.75 695.00,280.00" fill="none" stroke="#000000" stroke-width="24.5" stroke-linecap="round" stroke-linejoin="round" />
<polyline points="664.00,40.00 664.00,90.00" fill="none" stroke="#000000" stroke-width="47.5" stroke-linecap="round" stroke-linejoin="round" />
<polyline points="616.00,397.00 671.00,397.00" fill="none" stroke="#000000" stroke-width="50" stroke-linecap="round" stroke-linejoin="round" />
<polyline points="695.00,280.00 699.00,232.00" fill="none" stroke="#000000" stroke-width="25" stroke-linecap="round" stroke-linejoin="round" />
<rect x="181.00" y="172.00" width="25.00" height="47.60" fill="#000000" rx="1" />
<rect x="181.00" y="249.80" width="25.00" height="44.70" fill="#000000" rx="1" />
<rect x="138.60" y="302.00" width="11.40" height="98.00" fill="#000000" rx="6" />
<rect x="541.00" y="40.00" width="44.00" height="206.00" fill="#000000" rx="3" />
<rect x="620.00" y="40.00" width="28.00" height="78.00" fill="#000000" rx="3" />
<rect x="577.00" y="110.00" width="52.00" height="20.00" fill="#000000" rx="2" />
<rect x="577.00" y="169.00" width="52.00" height="21.00" fill="#000000" rx="2" />
<polyline points="220.00,82.00 239.00,101.00" fill="none" stroke="#000000" stroke-width="31" stroke-linecap="round" stroke-linejoin="round" />
<rect x="395.00" y="308.00" width="52.00" height="38.00" fill="#000000" rx="3" />
<rect x="621.00" y="125.00" width="25.00" height="48.00" fill="#000000" rx="3" />
<rect x="621.00" y="185.00" width="25.00" height="48.00" fill="#000000" rx="3" />
<rect x="240.00" y="300.00" width="22.00" height="100.00" fill="#000000" rx="3" />
<rect x="181.00" y="302.00" width="31.00" height="98.00" fill="#000000" rx="1" />
<rect x="240.00" y="296.00" width="36.00" height="34.00" fill="#000000" rx="2" />
<rect x="298.00" y="366.00" width="23.00" height="34.00" fill="#000000" rx="2" />
<rect x="262.00" y="310.00" width="34.50" height="62.00" fill="#000000" rx="3" />
<rect x="197.00" y="350.00" width="55.00" height="24.00" fill="#000000" rx="1" />
<rect x="241.00" y="262.00" width="34.00" height="38.00" fill="#000000" rx="3" />
<rect x="402.00" y="300.00" width="48.00" height="30.00" fill="#000000" rx="3" />
<rect x="250.00" y="165.00" width="20.00" height="40.00" fill="#000000" rx="2" />
<path d="M549 50 V60.5 H556 L566 50z" fill="#1a1a1a" stroke="#7c7c7c" stroke-width="0.5"/>
<rect x="343.75" y="112.00" width="127.50" height="126.75" fill="#5d5d5d" />
<rect x="343.75" y="112.00" width="127.50" height="126.75" fill="none" stroke="#4a4a4a" stroke-width="0.8" />
<text x="407.50" y="181.20" font-family='"Liberation Sans", sans-serif' font-size="17.2" fill="#8e8e8e" textLength="38.00" lengthAdjust="spacingAndGlyphs" text-anchor="middle" >GND</text>
<rect x="412.00" y="40.00" width="28.00" height="55.00" fill="#6a6a6a" />
<rect x="415.40" y="43.40" width="21.20" height="48.20" fill="#7e7e7e" />
<rect x="338.00" y="254.50" width="27.00" height="53.00" fill="#6a6a6a" />
<rect x="341.40" y="257.90" width="20.20" height="46.20" fill="#7e7e7e" />
<rect x="145.70" y="172.00" width="36.90" height="47.60" fill="#6a6a6a" />
<rect x="149.10" y="175.40" width="30.10" height="40.80" fill="#7e7e7e" />
<rect x="145.70" y="249.80" width="36.90" height="44.50" fill="#6a6a6a" />
<rect x="149.10" y="253.20" width="30.10" height="37.70" fill="#7e7e7e" />
<rect x="320.00" y="373.50" width="37.50" height="26.50" fill="#6a6a6a" />
<rect x="323.40" y="376.90" width="30.70" height="19.70" fill="#7e7e7e" />
<rect x="644.25" y="127.00" width="37.00" height="44.00" fill="#6a6a6a" />
<rect x="647.65" y="130.40" width="30.20" height="37.20" fill="#7e7e7e" />
<rect x="644.25" y="187.00" width="37.00" height="44.00" fill="#6a6a6a" />
<rect x="647.65" y="190.40" width="30.20" height="37.20" fill="#7e7e7e" />
<polyline points="426.00,40.00 426.00,69.00" fill="none" stroke="#8c8c8c" stroke-width="22" stroke-linecap="round" stroke-linejoin="round" />
<polyline points="351.50,258.00 351.50,296.00" fill="none" stroke="#8e8e8e" stroke-width="19" stroke-linecap="butt" stroke-linejoin="round" />
<polyline points="164.70,200.00 164.70,271.40" fill="none" stroke="#8c8c8c" stroke-width="15.5" stroke-linecap="round" stroke-linejoin="round" />
<polyline points="662.50,132.00 662.50,166.00" fill="none" stroke="#8e8e8e" stroke-width="20" stroke-linecap="butt" stroke-linejoin="round" />
<polyline points="662.50,192.00 662.50,226.00" fill="none" stroke="#8e8e8e" stroke-width="20" stroke-linecap="butt" stroke-linejoin="round" />
<polyline points="338.50,378.00 338.50,400.00" fill="none" stroke="#8e8e8e" stroke-width="24" stroke-linecap="butt" stroke-linejoin="round" />
<circle cx="320.50" cy="343.00" r="15.80" fill="#6a6a6a" />
<circle cx="320.50" cy="343.00" r="7.00" fill="#8a8a8a" />
<circle cx="482.50" cy="391.50" r="15.80" fill="#6a6a6a" />
<circle cx="482.50" cy="391.50" r="7.00" fill="#8a8a8a" />
<circle cx="546.50" cy="392.50" r="15.80" fill="#6a6a6a" />
<circle cx="546.50" cy="392.50" r="7.00" fill="#8a8a8a" />
<circle cx="130.00" cy="197.50" r="15.80" fill="#505050" />
<circle cx="365.50" cy="217.00" r="16.60" fill="#8a8a8a" />
<circle cx="365.50" cy="217.00" r="7.50" fill="#959595" />
<circle cx="439.50" cy="217.00" r="16.60" fill="#8a8a8a" />
<circle cx="439.50" cy="217.00" r="7.50" fill="#959595" />
<text transform="translate(168.6 245.6) rotate(-90)" font-family='"Liberation Sans", sans-serif' font-size="11" fill="#c4c4c4" textLength="22.5" lengthAdjust="spacingAndGlyphs">GND</text>
<text x="132.40" y="200.40" font-family='"Liberation Sans", sans-serif' font-size="8" fill="#8c8c8c" textLength="12.50" lengthAdjust="spacingAndGlyphs" >GN</text>
<text transform="translate(665.4 103) rotate(-90)" font-family='"Liberation Sans", sans-serif' font-size="3.6" fill="#a8a8a8">GND</text>
<text transform="translate(664 155) rotate(-90)" font-family='"Liberation Sans", sans-serif' font-size="4.4" fill="#9c9c9c">GND</text>
<text transform="translate(664 214) rotate(-90)" font-family='"Liberation Sans", sans-serif' font-size="4.4" fill="#9c9c9c">GND</text>
<text transform="translate(354 288) rotate(-90)" font-family='"Liberation Sans", sans-serif' font-size="4.4" fill="#9c9c9c">GND</text>
<clipPath id="padclip">
<rect x="277.75" y="43.50" width="48.25" height="50.50"/>
<rect x="341.00" y="43.50" width="21.25" height="50.50"/>
<rect x="378.00" y="43.50" width="21.50" height="50.50"/>
<rect x="452.75" y="43.50" width="21.25" height="50.50"/>
<rect x="489.75" y="43.50" width="48.00" height="50.50"/>
<rect x="277.75" y="109.10" width="48.25" height="21.15"/>
<rect x="489.75" y="109.10" width="48.00" height="21.15"/>
<rect x="277.75" y="146.50" width="48.25" height="20.90"/>
<rect x="489.75" y="146.50" width="48.00" height="20.90"/>
<rect x="277.75" y="183.50" width="48.25" height="21.00"/>
<rect x="489.75" y="183.50" width="48.00" height="21.00"/>
<rect x="277.75" y="221.00" width="48.25" height="21.00"/>
<rect x="489.75" y="221.00" width="48.00" height="21.00"/>
<rect x="277.75" y="258.00" width="48.25" height="48.00"/>
<rect x="489.75" y="258.00" width="48.00" height="47.25"/>
<rect x="378.00" y="258.00" width="21.50" height="47.25"/>
<rect x="415.50" y="258.00" width="21.00" height="47.25"/>
<rect x="452.75" y="258.00" width="21.25" height="47.25"/>
<rect x="208.70" y="175.50" width="30.20" height="40.60"/>
<rect x="208.90" y="253.30" width="30.10" height="37.70"/>
<rect x="149.25" y="313.00" width="30.25" height="37.50"/>
<rect x="209.00" y="313.00" width="30.00" height="37.50"/>
<rect x="149.25" y="373.00" width="30.25" height="23.50"/>
<rect x="209.00" y="373.00" width="30.00" height="23.50"/>
<rect x="264.75" y="376.50" width="29.75" height="20.00"/>
<rect x="588.50" y="43.50" width="31.00" height="5.40"/>
<rect x="648.50" y="43.50" width="30.00" height="5.40"/>
<rect x="588.50" y="71.00" width="31.00" height="37.50"/>
<rect x="648.50" y="71.00" width="30.00" height="37.50"/>
<rect x="588.50" y="131.00" width="31.00" height="36.75"/>
<rect x="588.50" y="190.50" width="31.00" height="37.25"/>
<rect x="578.00" y="282.25" width="70.50" height="32.25"/>
<rect x="578.00" y="379.25" width="70.50" height="17.25"/>
</clipPath>
<rect x="274.25" y="40.00" width="55.25" height="57.50" fill="#00a200" />
<rect x="277.95" y="43.70" width="47.85" height="50.10" fill="#b04e06" />
<rect x="337.50" y="40.00" width="28.25" height="57.50" fill="#00a200" />
<rect x="341.20" y="43.70" width="20.85" height="50.10" fill="#b04e06" />
<rect x="374.50" y="40.00" width="28.50" height="57.50" fill="#00a200" />
<rect x="378.20" y="43.70" width="21.10" height="50.10" fill="#b04e06" />
<rect x="449.25" y="40.00" width="28.25" height="57.50" fill="#00a200" />
<rect x="452.95" y="43.70" width="20.85" height="50.10" fill="#b04e06" />
<rect x="486.25" y="40.00" width="55.00" height="57.50" fill="#00a200" />
<rect x="489.95" y="43.70" width="47.60" height="50.10" fill="#b04e06" />
<rect x="274.25" y="105.60" width="55.25" height="28.15" fill="#00a200" />
<rect x="277.95" y="109.30" width="47.85" height="20.75" fill="#b04e06" />
<rect x="486.25" y="105.60" width="55.00" height="28.15" fill="#00a200" />
<rect x="489.95" y="109.30" width="47.60" height="20.75" fill="#b04e06" />
<rect x="274.25" y="143.00" width="55.25" height="27.90" fill="#00a200" />
<rect x="277.95" y="146.70" width="47.85" height="20.50" fill="#b04e06" />
<rect x="486.25" y="143.00" width="55.00" height="27.90" fill="#00a200" />
<rect x="489.95" y="146.70" width="47.60" height="20.50" fill="#b04e06" />
<rect x="274.25" y="180.00" width="55.25" height="28.00" fill="#00a200" />
<rect x="277.95" y="183.70" width="47.85" height="20.60" fill="#b04e06" />
<rect x="486.25" y="180.00" width="55.00" height="28.00" fill="#00a200" />
<rect x="489.95" y="183.70" width="47.60" height="20.60" fill="#b04e06" />
<rect x="274.25" y="217.50" width="55.25" height="28.00" fill="#00a200" />
<rect x="277.95" y="221.20" width="47.85" height="20.60" fill="#b04e06" />
<rect x="486.25" y="217.50" width="55.00" height="28.00" fill="#00a200" />
<rect x="489.95" y="221.20" width="47.60" height="20.60" fill="#b04e06" />
<rect x="274.25" y="254.50" width="55.25" height="55.00" fill="#00a200" />
<rect x="277.95" y="258.20" width="47.85" height="47.60" fill="#b04e06" />
<rect x="486.25" y="254.50" width="55.00" height="54.25" fill="#00a200" />
<rect x="489.95" y="258.20" width="47.60" height="46.85" fill="#b04e06" />
<rect x="374.50" y="254.50" width="28.50" height="54.25" fill="#00a200" />
<rect x="378.20" y="258.20" width="21.10" height="46.85" fill="#b04e06" />
<rect x="412.00" y="254.50" width="28.00" height="54.25" fill="#00a200" />
<rect x="415.70" y="258.20" width="20.60" height="46.85" fill="#b04e06" />
<rect x="449.25" y="254.50" width="28.25" height="54.25" fill="#00a200" />
<rect x="452.95" y="258.20" width="20.85" height="46.85" fill="#b04e06" />
<rect x="205.20" y="172.00" width="37.20" height="47.60" fill="#00a200" />
<rect x="208.90" y="175.70" width="29.80" height="40.20" fill="#b04e06" />
<rect x="205.40" y="249.80" width="37.10" height="44.70" fill="#00a200" />
<rect x="209.10" y="253.50" width="29.70" height="37.30" fill="#b04e06" />
<rect x="145.75" y="309.50" width="37.25" height="44.50" fill="#00a200" />
<rect x="149.45" y="313.20" width="29.85" height="37.10" fill="#b04e06" />
<rect x="205.50" y="309.50" width="37.00" height="44.50" fill="#00a200" />
<rect x="209.20" y="313.20" width="29.60" height="37.10" fill="#b04e06" />
<rect x="145.75" y="369.50" width="37.25" height="30.50" fill="#00a200" />
<rect x="149.45" y="373.20" width="29.85" height="23.10" fill="#b04e06" />
<rect x="205.50" y="369.50" width="37.00" height="30.50" fill="#00a200" />
<rect x="209.20" y="373.20" width="29.60" height="23.10" fill="#b04e06" />
<rect x="261.25" y="373.00" width="36.75" height="27.00" fill="#00a200" />
<rect x="264.95" y="376.70" width="29.35" height="19.60" fill="#b04e06" />
<rect x="585.00" y="40.00" width="38.00" height="12.40" fill="#00a200" />
<rect x="588.70" y="43.70" width="30.60" height="5.00" fill="#b04e06" />
<rect x="645.00" y="40.00" width="37.00" height="12.40" fill="#00a200" />
<rect x="648.70" y="43.70" width="29.60" height="5.00" fill="#b04e06" />
<rect x="585.00" y="67.50" width="38.00" height="44.50" fill="#00a200" />
<rect x="588.70" y="71.20" width="30.60" height="37.10" fill="#b04e06" />
<rect x="645.00" y="67.50" width="37.00" height="44.50" fill="#00a200" />
<rect x="648.70" y="71.20" width="29.60" height="37.10" fill="#b04e06" />
<rect x="585.00" y="127.50" width="38.00" height="43.75" fill="#00a200" />
<rect x="588.70" y="131.20" width="30.60" height="36.35" fill="#b04e06" />
<rect x="585.00" y="187.00" width="38.00" height="44.25" fill="#00a200" />
<rect x="588.70" y="190.70" width="30.60" height="36.85" fill="#b04e06" />
<rect x="574.50" y="278.75" width="77.50" height="39.25" fill="#00a200" />
<rect x="578.20" y="282.45" width="70.10" height="31.85" fill="#b04e06" />
<rect x="574.50" y="375.75" width="77.50" height="24.25" fill="#00a200" />
<rect x="578.20" y="379.45" width="70.10" height="16.85" fill="#b04e06" />
<rect x="277.95" y="43.70" width="47.85" height="50.10" fill="#a04600" />
<rect x="341.20" y="43.70" width="20.85" height="50.10" fill="#a04600" />
<rect x="378.20" y="43.70" width="21.10" height="50.10" fill="#a04600" />
<rect x="452.95" y="43.70" width="20.85" height="50.10" fill="#a04600" />
<rect x="489.95" y="43.70" width="47.60" height="50.10" fill="#a04600" />
<rect x="277.95" y="109.30" width="47.85" height="20.75" fill="#a04600" />
<rect x="489.95" y="109.30" width="47.60" height="20.75" fill="#a04600" />
<rect x="277.95" y="146.70" width="47.85" height="20.50" fill="#a04600" />
<rect x="489.95" y="146.70" width="47.60" height="20.50" fill="#a04600" />
<rect x="277.95" y="183.70" width="47.85" height="20.60" fill="#a04600" />
<rect x="489.95" y="183.70" width="47.60" height="20.60" fill="#a04600" />
<rect x="277.95" y="221.20" width="47.85" height="20.60" fill="#a04600" />
<rect x="489.95" y="221.20" width="47.60" height="20.60" fill="#a04600" />
<rect x="277.95" y="258.20" width="47.85" height="47.60" fill="#a04600" />
<rect x="489.95" y="258.20" width="47.60" height="46.85" fill="#a04600" />
<rect x="378.20" y="258.20" width="21.10" height="46.85" fill="#a04600" />
<rect x="415.70" y="258.20" width="20.60" height="46.85" fill="#a04600" />
<rect x="452.95" y="258.20" width="20.85" height="46.85" fill="#a04600" />
<g clip-path="url(#padclip)">
<rect x="292.40" y="60.50" width="230.10" height="230.70" fill="#b04e06" />
</g>
<polyline points="220.00,82.00 262.00,124.00" fill="none" stroke="#e21a0a" stroke-width="7" stroke-linecap="round" stroke-linejoin="round" />
<polyline points="262.00,196.50 298.00,196.50 304.00,193.00" fill="none" stroke="#e21a0a" stroke-width="7.5" stroke-linecap="round" stroke-linejoin="round" />
<polyline points="224.50,332.00 224.50,272.50 283.00,272.50 297.00,286.00" fill="none" stroke="#e21a0a" stroke-width="7.4" stroke-linecap="round" stroke-linejoin="round" />
<polyline points="164.60,332.00 164.60,400.00" fill="none" stroke="#9a0600" stroke-width="29.2" stroke-linecap="round" stroke-linejoin="round" />
<polyline points="224.00,390.00 280.00,390.00" fill="none" stroke="#e21a0a" stroke-width="4.5" stroke-linecap="round" stroke-linejoin="round" />
<polyline points="296.75,40.00 296.75,71.00" fill="none" stroke="#b00000" stroke-width="6" stroke-linecap="round" stroke-linejoin="round" />
<polyline points="346.75,40.00 346.75,64.50" fill="none" stroke="#b00000" stroke-width="13.5" stroke-linecap="round" stroke-linejoin="round" />
<polyline points="386.50,40.00 386.50,60.00" fill="none" stroke="#b00000" stroke-width="12" stroke-linecap="round" stroke-linejoin="round" />
<polyline points="458.25,40.00 458.25,70.00" fill="none" stroke="#b00000" stroke-width="7" stroke-linecap="round" stroke-linejoin="round" />
<polyline points="509.50,73.40 562.50,73.20 594.00,42.00" fill="none" stroke="#b00000" stroke-width="8" stroke-linecap="round" stroke-linejoin="round" />
<polyline points="509.50,123.70 572.50,123.70 605.00,91.00" fill="none" stroke="#b00000" stroke-width="7" stroke-linecap="round" stroke-linejoin="round" />
<polyline points="509.50,161.00 589.00,161.00 604.00,147.00" fill="none" stroke="#b00000" stroke-width="6.8" stroke-linecap="round" stroke-linejoin="round" />
<polyline points="509.50,197.50 563.75,197.50" fill="none" stroke="#e21a0a" stroke-width="7" stroke-linecap="round" stroke-linejoin="round" />
<polyline points="509.50,235.60 576.00,235.60 604.00,208.50" fill="none" stroke="#b00000" stroke-width="7" stroke-linecap="round" stroke-linejoin="round" />
<polyline points="509.00,285.00 519.25,296.00 519.25,342.50" fill="none" stroke="#b00000" stroke-width="7" stroke-linecap="round" stroke-linejoin="round" />
<polyline points="383.75,284.00 383.75,342.50" fill="none" stroke="#b00000" stroke-width="7" stroke-linecap="round" stroke-linejoin="round" />
<polyline points="421.20,283.00 421.20,352.50 436.40,370.00 436.40,400.00" fill="none" stroke="#b00000" stroke-width="7" stroke-linecap="round" stroke-linejoin="round" />
<polyline points="458.25,283.00 458.25,342.50" fill="none" stroke="#b00000" stroke-width="7" stroke-linecap="round" stroke-linejoin="round" />
<polyline points="611.00,298.75 677.50,298.75 695.00,280.00" fill="none" stroke="#b00000" stroke-width="6.5" stroke-linecap="round" stroke-linejoin="round" />
<polyline points="664.00,40.00 664.00,90.00" fill="none" stroke="#9a0600" stroke-width="29.5" stroke-linecap="round" stroke-linejoin="round" />
<polyline points="616.00,397.00 671.00,397.00" fill="none" stroke="#9a0600" stroke-width="32" stroke-linecap="round" stroke-linejoin="round" />
<polyline points="695.00,280.00 699.00,232.00" fill="none" stroke="#b00000" stroke-width="7" stroke-linecap="round" stroke-linejoin="round" />
<g clip-path="url(#padclip)">
<polyline points="220.00,82.00 262.00,124.00" fill="none" stroke="#e02c08" stroke-width="7" stroke-linecap="round" stroke-linejoin="round" />
<polyline points="262.00,196.50 298.00,196.50 304.00,193.00" fill="none" stroke="#e02c08" stroke-width="7.5" stroke-linecap="round" stroke-linejoin="round" />
<polyline points="224.50,332.00 224.50,272.50 283.00,272.50 297.00,286.00" fill="none" stroke="#e02c08" stroke-width="7.4" stroke-linecap="round" stroke-linejoin="round" />
<polyline points="164.60,332.00 164.60,400.00" fill="none" stroke="#e02c08" stroke-width="29.2" stroke-linecap="round" stroke-linejoin="round" />
<polyline points="224.00,390.00 280.00,390.00" fill="none" stroke="#e02c08" stroke-width="4.5" stroke-linecap="round" stroke-linejoin="round" />
<polyline points="296.75,40.00 296.75,71.00" fill="none" stroke="#e02c08" stroke-width="6" stroke-linecap="round" stroke-linejoin="round" />
<polyline points="346.75,40.00 346.75,64.50" fill="none" stroke="#e02c08" stroke-width="13.5" stroke-linecap="round" stroke-linejoin="round" />
<polyline points="386.50,40.00 386.50,60.00" fill="none" stroke="#e02c08" stroke-width="12" stroke-linecap="round" stroke-linejoin="round" />
<polyline points="458.25,40.00 458.25,70.00" fill="none" stroke="#e02c08" stroke-width="7" stroke-linecap="round" stroke-linejoin="round" />
<polyline points="509.50,73.40 562.50,73.20 594.00,42.00" fill="none" stroke="#e02c08" stroke-width="8" stroke-linecap="round" stroke-linejoin="round" />
<polyline points="509.50,123.70 572.50,123.70 605.00,91.00" fill="none" stroke="#e02c08" stroke-width="7" stroke-linecap="round" stroke-linejoin="round" />
<polyline points="509.50,161.00 589.00,161.00 604.00,147.00" fill="none" stroke="#e02c08" stroke-width="6.8" stroke-linecap="round" stroke-linejoin="round" />
<polyline points="509.50,197.50 563.75,197.50" fill="none" stroke="#e02c08" stroke-width="7" stroke-linecap="round" stroke-linejoin="round" />
<polyline points="509.50,235.60 576.00,235.60 604.00,208.50" fill="none" stroke="#e02c08" stroke-width="7" stroke-linecap="round" stroke-linejoin="round" />
<polyline points="509.00,285.00 519.25,296.00 519.25,342.50" fill="none" stroke="#e02c08" stroke-width="7" stroke-linecap="round" stroke-linejoin="round" />
<polyline points="383.75,284.00 383.75,342.50" fill="none" stroke="#e02c08" stroke-width="7" stroke-linecap="round" stroke-linejoin="round" />
<polyline points="421.20,283.00 421.20,352.50 436.40,370.00 436.40,400.00" fill="none" stroke="#e02c08" stroke-width="7" stroke-linecap="round" stroke-linejoin="round" />
<polyline points="458.25,283.00 458.25,342.50" fill="none" stroke="#e02c08" stroke-width="7" stroke-linecap="round" stroke-linejoin="round" />
<polyline points="611.00,298.75 677.50,298.75 695.00,280.00" fill="none" stroke="#e02c08" stroke-width="6.5" stroke-linecap="round" stroke-linejoin="round" />
<polyline points="664.00,40.00 664.00,90.00" fill="none" stroke="#e02c08" stroke-width="29.5" stroke-linecap="round" stroke-linejoin="round" />
<polyline points="616.00,397.00 671.00,397.00" fill="none" stroke="#e02c08" stroke-width="32" stroke-linecap="round" stroke-linejoin="round" />
<polyline points="695.00,280.00 699.00,232.00" fill="none" stroke="#e02c08" stroke-width="7" stroke-linecap="round" stroke-linejoin="round" />
</g>
<circle cx="386.50" cy="70.00" r="11.40" fill="#f21a10" />
<circle cx="458.25" cy="70.00" r="5.00" fill="#f21a10" />
<circle cx="164.60" cy="392.00" r="14.60" fill="#f61a0c" />
<circle cx="296.75" cy="73.20" r="3.60" fill="#f21a10" />
<circle cx="513.75" cy="73.75" r="3.60" fill="#f01c10" />
<circle cx="513.75" cy="123.70" r="3.60" fill="#f01c10" />
<circle cx="513.75" cy="161.00" r="3.60" fill="#f01c10" />
<circle cx="513.75" cy="197.50" r="3.60" fill="#f01c10" />
<circle cx="513.75" cy="235.60" r="3.60" fill="#f01c10" />
<circle cx="220.00" cy="82.00" r="16.50" fill="#a60000" />
<circle cx="220.00" cy="82.00" r="7.00" fill="#aa6c6c" />
<circle cx="272.50" cy="343.00" r="16.50" fill="#a60000" />
<circle cx="272.50" cy="343.00" r="7.00" fill="#aa6c6c" />
<circle cx="383.75" cy="342.50" r="16.50" fill="#a60000" />
<circle cx="383.75" cy="342.50" r="7.00" fill="#aa6c6c" />
<circle cx="458.25" cy="342.50" r="16.50" fill="#a60000" />
<circle cx="458.25" cy="342.50" r="7.00" fill="#aa6c6c" />
<circle cx="519.25" cy="342.50" r="16.50" fill="#a60000" />
<circle cx="519.25" cy="342.50" r="7.00" fill="#aa6c6c" />
<circle cx="563.75" cy="197.50" r="16.50" fill="#a60000" />
<circle cx="563.75" cy="197.50" r="7.00" fill="#aa6c6c" />
<circle cx="695.00" cy="280.00" r="16.50" fill="#a60000" />
<circle cx="695.00" cy="280.00" r="7.00" fill="#aa6c6c" />
<circle cx="695.00" cy="346.00" r="16.50" fill="#a60000" />
<circle cx="695.00" cy="346.00" r="7.00" fill="#aa6c6c" />
<circle cx="673.75" cy="393.50" r="16.50" fill="#e00a0a" />
<circle cx="673.75" cy="393.50" r="7.30" fill="#d87a7a" />
<polyline points="220.00,82.00 262.00,124.00" fill="none" stroke="#e00a0a" stroke-width="7" stroke-linecap="round" stroke-linejoin="round" />
<circle cx="220.00" cy="82.00" r="7.00" fill="#aa6c6c" />
<path d="M370.35 332.5 L380.75 315.5 H386.75 L397.15 332.5 L383.75 342.5z" fill="#c20000" fill-opacity="0.32" stroke="#e02828" stroke-width="0.45"/>
<polyline points="383.75,342.50 383.75,308.75" fill="none" stroke="#cc0a0a" stroke-width="7" stroke-linecap="butt" stroke-linejoin="round" />
<circle cx="383.75" cy="342.50" r="7.00" fill="#aa6c6c" />
<path d="M444.85 332.5 L455.25 315.5 H461.25 L471.65 332.5 L458.25 342.5z" fill="#c20000" fill-opacity="0.32" stroke="#e02828" stroke-width="0.45"/>
<polyline points="458.25,342.50 458.25,308.75" fill="none" stroke="#cc0a0a" stroke-width="7" stroke-linecap="butt" stroke-linejoin="round" />
<circle cx="458.25" cy="342.50" r="7.00" fill="#aa6c6c" />
<path d="M505.85 332.5 L516.25 315.5 H522.25 L532.65 332.5 L519.25 342.5z" fill="#c20000" fill-opacity="0.32" stroke="#e02828" stroke-width="0.45"/>
<polyline points="519.25,342.50 519.25,308.75" fill="none" stroke="#cc0a0a" stroke-width="7" stroke-linecap="butt" stroke-linejoin="round" />
<circle cx="519.25" cy="342.50" r="7.00" fill="#aa6c6c" />
<path d="M553.5 186 L541.5 194.5 V200.5 L553.5 209 L563.75 197.5z" fill="#c20000" fill-opacity="0.32" stroke="#e02828" stroke-width="0.45"/>
<polyline points="541.50,197.50 563.75,197.50" fill="none" stroke="#cc0a0a" stroke-width="7" stroke-linecap="butt" stroke-linejoin="round" />
<circle cx="563.75" cy="197.50" r="7.00" fill="#aa6c6c" />
<path d="M236.1 79.1 L243.5 100.5 L238.5 105.5 L217.1 98.1 L220 82z M220 82 L243.5 100.5 M220 82 L238.5 105.5" fill="#b00404" fill-opacity="0.9" stroke="#f03030" stroke-width="0.5" stroke-linejoin="round"/>
<polyline points="220.00,82.00 262.00,124.00" fill="none" stroke="#e00a0a" stroke-width="7" stroke-linecap="round" stroke-linejoin="round" />
<circle cx="220.00" cy="82.00" r="7.00" fill="#aa6c6c" />
<path d="M683 270 L672 298 L699 296" fill="#d00000" fill-opacity="0.5" stroke="#f04040" stroke-width="0.4"/>
<pattern id="hatch" width="2.2" height="2.2" patternUnits="userSpaceOnUse"><rect width="1.1" height="1.1" fill="#ffffff" fill-opacity="0.055"/><rect x="1.1" y="1.1" width="1.1" height="1.1" fill="#ffffff" fill-opacity="0.055"/></pattern>
<rect x="633.00" y="267.00" width="67.00" height="133.00" fill="url(#hatch)" />
<rect x="182.60" y="175.00" width="22.70" height="41.70" fill="url(#hatch)" />
<rect x="182.60" y="253.60" width="22.70" height="37.60" fill="url(#hatch)" />
<rect x="183.00" y="313.70" width="22.50" height="37.00" fill="url(#hatch)" />
<rect x="183.00" y="373.20" width="22.50" height="26.80" fill="url(#hatch)" />
<rect x="298.00" y="376.20" width="22.00" height="23.80" fill="url(#hatch)" />
<rect x="623.00" y="71.20" width="22.00" height="38.00" fill="url(#hatch)" />
<rect x="623.00" y="131.20" width="21.30" height="37.00" fill="url(#hatch)" />
<rect x="623.00" y="190.70" width="21.30" height="37.50" fill="url(#hatch)" />
<rect x="292.40" y="60.50" width="230.10" height="230.70" fill="url(#hatch)" />
<path d="M292.4 60.5 H522.5 V291.2 H292.4z" fill="none" stroke="#34b0e2" stroke-width="1.05" stroke-opacity="0.72"/>
<path d="M477.5 60.5 L522.5 103.7" fill="none" stroke="#2aa0cc" stroke-width="0.8" stroke-opacity="0.8"/>
<rect x="156.80" y="175.00" width="74.40" height="41.70" fill="none" stroke="#2aa0cc" stroke-width="0.8" stroke-opacity="0.72"/>
<rect x="156.80" y="253.60" width="74.40" height="37.60" fill="none" stroke="#2aa0cc" stroke-width="0.8" stroke-opacity="0.72"/>
<rect x="157.00" y="313.70" width="74.20" height="37.00" fill="none" stroke="#2aa0cc" stroke-width="0.8" stroke-opacity="0.72"/>
<rect x="157.00" y="373.20" width="74.20" height="26.80" fill="none" stroke="#2aa0cc" stroke-width="0.8" stroke-opacity="0.72"/>
<rect x="272.50" y="376.20" width="73.50" height="23.80" fill="none" stroke="#2aa0cc" stroke-width="0.8" stroke-opacity="0.72"/>
<rect x="596.20" y="40.00" width="75.80" height="10.80" fill="none" stroke="#2aa0cc" stroke-width="0.8" stroke-opacity="0.72"/>
<rect x="596.20" y="71.20" width="75.80" height="38.00" fill="none" stroke="#2aa0cc" stroke-width="0.8" stroke-opacity="0.72"/>
<rect x="596.20" y="131.20" width="75.80" height="37.00" fill="none" stroke="#2aa0cc" stroke-width="0.8" stroke-opacity="0.72"/>
<rect x="596.20" y="190.70" width="75.80" height="37.50" fill="none" stroke="#2aa0cc" stroke-width="0.8" stroke-opacity="0.72"/>
<path d="M700 267 H633 V400" fill="none" stroke="#2aa0cc" stroke-width="0.9" stroke-opacity="0.75"/>
<rect x="596.20" y="71.20" width="23.00" height="38.00" fill="none" stroke="#e0bcb0" stroke-width="0.45" stroke-opacity="0.6"/>
<rect x="648.50" y="71.20" width="23.50" height="38.00" fill="none" stroke="#e0bcb0" stroke-width="0.45" stroke-opacity="0.6"/>
<rect x="596.20" y="131.20" width="23.00" height="37.00" fill="none" stroke="#e0bcb0" stroke-width="0.45" stroke-opacity="0.6"/>
<rect x="648.50" y="131.20" width="23.50" height="37.00" fill="none" stroke="#e0bcb0" stroke-width="0.45" stroke-opacity="0.6"/>
<rect x="596.20" y="190.70" width="23.00" height="37.50" fill="none" stroke="#e0bcb0" stroke-width="0.45" stroke-opacity="0.6"/>
<rect x="648.50" y="190.70" width="23.50" height="37.50" fill="none" stroke="#e0bcb0" stroke-width="0.45" stroke-opacity="0.6"/>
<rect x="595.50" y="287.50" width="37.50" height="23.00" fill="none" stroke="#e0bcb0" stroke-width="0.45" stroke-opacity="0.6"/>
<rect x="595.50" y="384.50" width="37.50" height="15.50" fill="none" stroke="#e0bcb0" stroke-width="0.45" stroke-opacity="0.6"/>
<text x="301.5" y="71.2" text-anchor="middle" font-family='"Liberation Sans", sans-serif' font-size="3.6" fill="#f0d6c0">BMC_ C2D</text>
<text x="301.5" y="120.8" text-anchor="middle" font-family='"Liberation Sans", sans-serif' font-size="2.8" fill="#f0d6c0">BMK BUCK P47</text>
<text x="301.5" y="158.2" text-anchor="middle" font-family='"Liberation Sans", sans-serif' font-size="2.8" fill="#f0d6c0">BNQ7A Q5 K2UP</text>
<text x="301.5" y="195.6" text-anchor="middle" font-family='"Liberation Sans", sans-serif' font-size="2.8" fill="#f0d6c0">BUCK POWER BK</text>
<text x="301.5" y="232.8" text-anchor="middle" font-family='"Liberation Sans", sans-serif' font-size="2.8" fill="#f0d6c0">BMK BUCK P44</text>
<text x="301.5" y="283" text-anchor="middle" font-family='"Liberation Sans", sans-serif' font-size="2.8" fill="#f0d6c0">BUCK BBC 5P</text>
<text x="512" y="71.2" text-anchor="middle" font-family='"Liberation Sans", sans-serif' font-size="3.4" fill="#f0d6c0">BMC_  P01</text>
<text x="512" y="120.6" text-anchor="middle" font-family='"Liberation Sans", sans-serif' font-size="3.4" fill="#f0d6c0">BMC_  P02</text>
<text x="512" y="158" text-anchor="middle" font-family='"Liberation Sans", sans-serif' font-size="3.4" fill="#f0d6c0">BMC_  P03</text>
<text x="512" y="195" text-anchor="middle" font-family='"Liberation Sans", sans-serif' font-size="3.4" fill="#f0d6c0">BUCK_LAT_IN</text>
<text x="512" y="232.6" text-anchor="middle" font-family='"Liberation Sans", sans-serif' font-size="3.4" fill="#f0d6c0">BMC_  P05</text>
<text x="512" y="283" text-anchor="middle" font-family='"Liberation Sans", sans-serif' font-size="3.4" fill="#f0d6c0">BBCM ACCK</text>
<text transform="translate(353 70) rotate(-90)" text-anchor="middle" font-family='"Liberation Sans", sans-serif' font-size="3" fill="#f0d6c0">BMC2 CCCK</text>
<text transform="translate(390.6 70) rotate(-90)" text-anchor="middle" font-family='"Liberation Sans", sans-serif' font-size="3.6" fill="#f0d6c0">3V3 AO</text>
<text transform="translate(464.6 72) rotate(-90)" text-anchor="middle" font-family='"Liberation Sans", sans-serif' font-size="2.8" fill="#f0d6c0">BMCL 5mB ENv</text>
<text transform="translate(390.5 283) rotate(-90)" text-anchor="middle" font-family='"Liberation Sans", sans-serif' font-size="2.8" fill="#f0d6c0">BBK_K7_P4</text>
<text transform="translate(428 283) rotate(-90)" text-anchor="middle" font-family='"Liberation Sans", sans-serif' font-size="2.8" fill="#f0d6c0">BBK_K7_P4</text>
<text transform="translate(465 283) rotate(-90)" text-anchor="middle" font-family='"Liberation Sans", sans-serif' font-size="2.8" fill="#f0d6c0">BBK_C_POCK7</text>
<text transform="translate(226.5 283) rotate(-90)" text-anchor="middle" font-family='"Liberation Sans", sans-serif' font-size="2.8" fill="#f0d6c0">P7N4T4AL</text>
<text transform="translate(226.5 335) rotate(-90)" text-anchor="middle" font-family='"Liberation Sans", sans-serif' font-size="2.8" fill="#f0d6c0">P7N4T4AL</text>
<text transform="translate(166 331) rotate(-90)" text-anchor="middle" font-family='"Liberation Sans", sans-serif' font-size="3.2" fill="#f0d6c0">3V3 AO</text>
<text transform="translate(166 392) rotate(-90)" text-anchor="middle" font-family='"Liberation Sans", sans-serif' font-size="3.2" fill="#f0d6c0">AO</text>
<text transform="translate(604.5 90) rotate(-90)" text-anchor="middle" font-family='"Liberation Sans", sans-serif' font-size="2.6" fill="#f0d6c0">BMCU P4</text>
<text transform="translate(604.5 150) rotate(-90)" text-anchor="middle" font-family='"Liberation Sans", sans-serif' font-size="2.6" fill="#f0d6c0">BMCU P4</text>
<text transform="translate(604.5 210) rotate(-90)" text-anchor="middle" font-family='"Liberation Sans", sans-serif' font-size="2.6" fill="#f0d6c0">BMCU P4</text>
<text transform="translate(666 92) rotate(-90)" text-anchor="middle" font-family='"Liberation Sans", sans-serif' font-size="3" fill="#f0d6c0">3V3 AO</text>
<text x="596.20" y="300.90" font-family='"Liberation Sans", sans-serif' font-size="6" fill="#e8d2c0" textLength="34.00" lengthAdjust="spacingAndGlyphs" >POWER_EN</text>
<text x="541.50" y="125.80" font-family='"Liberation Sans", sans-serif' font-size="5" fill="#e23232" textLength="18.00" lengthAdjust="spacingAndGlyphs" >CU_P02</text>
<text x="540.00" y="163.00" font-family='"Liberation Sans", sans-serif' font-size="5" fill="#e23232" textLength="27.00" lengthAdjust="spacingAndGlyphs" >MCU_P03</text>
<text x="540.50" y="237.60" font-family='"Liberation Sans", sans-serif' font-size="5" fill="#e23232" textLength="20.00" lengthAdjust="spacingAndGlyphs" >CU_P05</text>
<text x="651.00" y="300.80" font-family='"Liberation Sans", sans-serif' font-size="5.6" fill="#e23232" textLength="9.00" lengthAdjust="spacingAndGlyphs" >EN</text>
<text x="541.50" y="75.60" font-family='"Liberation Sans", sans-serif' font-size="5" fill="#e23232" >P0</text>
<text transform="translate(168.2 366) rotate(-90)" font-family='"Liberation Sans", sans-serif' font-size="5.6" fill="#ff4a2a" textLength="21" lengthAdjust="spacingAndGlyphs">3V3_AC</text>
<text transform="translate(666.9 72) rotate(-90)" font-family='"Liberation Sans", sans-serif' font-size="6" fill="#f23a1a" textLength="21.5" lengthAdjust="spacingAndGlyphs">3V3_AC</text>
<text transform="translate(423.4 337) rotate(-90)" font-family='"Liberation Sans", sans-serif' font-size="4" fill="#d83a3a">FORCE_OFF</text>
<text transform="translate(573.5 64.5) rotate(-45)" font-family='"Liberation Sans", sans-serif' font-size="4.6" fill="#ff3a3a">BMCL</text>
<text x="246.00" y="274.20" font-family='"Liberation Sans", sans-serif' font-size="3.4" fill="#ff5a4a" textLength="22.00" lengthAdjust="spacingAndGlyphs" >MCU BMC SEL</text>
</g>
<line x1="126.00" y1="50.30" x2="699.00" y2="50.30" stroke="#2a2a2a" stroke-width="0.5" />
<rect x="144.10" y="105.60" width="121.90" height="103.20" fill="#080808" fill-opacity="0.75"/>
<rect x="145.30" y="106.60" width="119.50" height="100.60" fill="#f0f0f0" />
<rect x="145.30" y="106.60" width="119.50" height="12.40" fill="#ffffff" />
<rect x="145.30" y="198.60" width="119.50" height="8.60" fill="#f6f6f6" />
<g><path d="M148 108.6 h4.6 l1.4 1.6 v2 h-6z" fill="#1c2f8a"/><path d="M148.4 116.6 l2.2 -4.6 l1.6 3 l3.4 -4.4 l-1.2 5 l-2.4 -1.6z" fill="#d81e28"/></g>
<text x="158.00" y="114.90" font-family='"Liberation Sans", sans-serif' font-size="6.2" fill="#a2a2a2" textLength="43.60" lengthAdjust="spacingAndGlyphs" >Derive Connect...</text>
<line x1="211.00" y1="112.60" x2="215.80" y2="112.60" stroke="#9a9a9a" stroke-width="0.6" />
<rect x="231.60" y="110.40" width="4.20" height="4.20" fill="none" stroke="#e0e0e0" stroke-width="0.6" />
<path d="M252.4 110.2 l4.6 4.6 M257 110.2 l-4.6 4.6" stroke="#6a6a6a" stroke-width="0.6"/>
<rect x="145.70" y="122.70" width="98.30" height="23.20" fill="none" stroke="#f5b719" stroke-width="1.6" rx="2.4" />
<rect x="145.70" y="182.00" width="35.00" height="16.00" fill="none" stroke="#f5b719" stroke-width="1.6" rx="2.4" />
<rect x="148.40" y="127.10" width="5.60" height="5.60" fill="#ffffff" stroke="#444444" stroke-width="0.5" />
<path d="M149.5 129.9 l1.3 1.5 l2.5 -3.2" fill="none" stroke="#222" stroke-width="0.65"/>
<text x="155.50" y="131.90" font-family='"Liberation Sans", sans-serif' font-size="5.7" fill="#111" textLength="62.90" lengthAdjust="spacingAndGlyphs" >Convert lines to connect lines</text>
<rect x="154.40" y="137.80" width="5.60" height="5.60" fill="#ffffff" stroke="#444444" stroke-width="0.5" />
<path d="M155.5 140.6 l1.3 1.5 l2.5 -3.2" fill="none" stroke="#222" stroke-width="0.65"/>
<text x="162.00" y="142.60" font-family='"Liberation Sans", sans-serif' font-size="5.7" fill="#111" textLength="76.70" lengthAdjust="spacingAndGlyphs" >Keep connect lines if no connection</text>
<rect x="148.40" y="148.60" width="5.60" height="5.60" fill="#ffffff" stroke="#444444" stroke-width="0.5" />
<text x="155.50" y="153.40" font-family='"Liberation Sans", sans-serif' font-size="5.7" fill="#111" textLength="65.70" lengthAdjust="spacingAndGlyphs" >Convert figure stackups to vias</text>
<rect x="148.40" y="159.60" width="5.60" height="5.60" fill="#ffffff" stroke="#444444" stroke-width="0.5" />
<text x="155.50" y="164.40" font-family='"Liberation Sans", sans-serif' font-size="5.7" fill="#111" textLength="26.80" lengthAdjust="spacingAndGlyphs" >Convert pins</text>
<rect x="149.00" y="185.50" width="29.70" height="9.40" fill="#e5f1fb" stroke="#0078d7" stroke-width="1" />
<text x="163.85" y="192.30" font-family='"Liberation Sans", sans-serif' font-size="5.8" fill="#111" textLength="7.60" lengthAdjust="spacingAndGlyphs" text-anchor="middle" >OK</text>
<rect x="183.50" y="185.50" width="30.10" height="9.40" fill="#e1e1e1" stroke="#adadad" stroke-width="0.6" />
<text x="198.55" y="192.30" font-family='"Liberation Sans", sans-serif' font-size="5.8" fill="#111" textLength="15.50" lengthAdjust="spacingAndGlyphs" text-anchor="middle" >Cancel</text>
<rect x="227.70" y="185.50" width="30.10" height="9.40" fill="#e1e1e1" stroke="#adadad" stroke-width="0.6" />
<text x="242.75" y="192.30" font-family='"Liberation Sans", sans-serif' font-size="5.8" fill="#111" textLength="10.00" lengthAdjust="spacingAndGlyphs" text-anchor="middle" >Help</text>
<g opacity="0.92">
<text x="713.5" y="456.6" font-family='"Liberation Sans", sans-serif' font-size="15.6" fill="#8a8a8a" stroke="#ffffff" stroke-width="0.5" paint-order="stroke" textLength="64.5" lengthAdjust="spacingAndGlyphs">CSDN @</text>
<g transform="translate(778.6 442.6) scale(0.162)"><path d="M30 6 L36 16 M8 24 H60 M50 26 C44 55 30 78 8 94 M16 36 C28 55 44 76 60 92 M70 22 V66 M90 6 V86 Q90 96 76 92" fill="none" stroke="#ffffff" stroke-width="14" stroke-linecap="round" stroke-linejoin="round"/><path d="M30 6 L36 16 M8 24 H60 M50 26 C44 55 30 78 8 94 M16 36 C28 55 44 76 60 92 M70 22 V66 M90 6 V86 Q90 96 76 92" fill="none" stroke="#8a8a8a" stroke-width="8" stroke-linecap="round" stroke-linejoin="round"/></g>
<g transform="translate(795.2 442.6) scale(0.162)"><path d="M50 6 V86 Q50 96 34 90 M26 34 C22 52 14 66 6 76 M72 32 C78 50 86 64 94 74" fill="none" stroke="#ffffff" stroke-width="14" stroke-linecap="round" stroke-linejoin="round"/><path d="M50 6 V86 Q50 96 34 90 M26 34 C22 52 14 66 6 76 M72 32 C78 50 86 64 94 74" fill="none" stroke="#8a8a8a" stroke-width="8" stroke-linecap="round" stroke-linejoin="round"/></g>
<g transform="translate(812.4 442.6) scale(0.162)"><path d="M12 12 V94 M12 12 H88 V84 Q88 96 72 92 M30 32 H70 M32 50 H68 V74 H32 Z" fill="none" stroke="#ffffff" stroke-width="14" stroke-linecap="round" stroke-linejoin="round"/><path d="M12 12 V94 M12 12 H88 V84 Q88 96 72 92 M30 32 H70 M32 50 H68 V74 H32 Z" fill="none" stroke="#8a8a8a" stroke-width="8" stroke-linecap="round" stroke-linejoin="round"/></g>
<g transform="translate(830.4 442.6) scale(0.162)"><path d="M22 6 L30 20 M48 4 L52 18 M80 6 L70 20 M8 40 V28 H92 V40 M28 46 H70 L50 60 M6 70 H94 M50 60 V88 Q50 98 34 92" fill="none" stroke="#ffffff" stroke-width="14" stroke-linecap="round" stroke-linejoin="round"/><path d="M22 6 L30 20 M48 4 L52 18 M80 6 L70 20 M8 40 V28 H92 V40 M28 46 H70 L50 60 M6 70 H94 M50 60 V88 Q50 98 34 92" fill="none" stroke="#8a8a8a" stroke-width="8" stroke-linecap="round" stroke-linejoin="round"/></g>
</g>
</svg>
</div></body></html>
